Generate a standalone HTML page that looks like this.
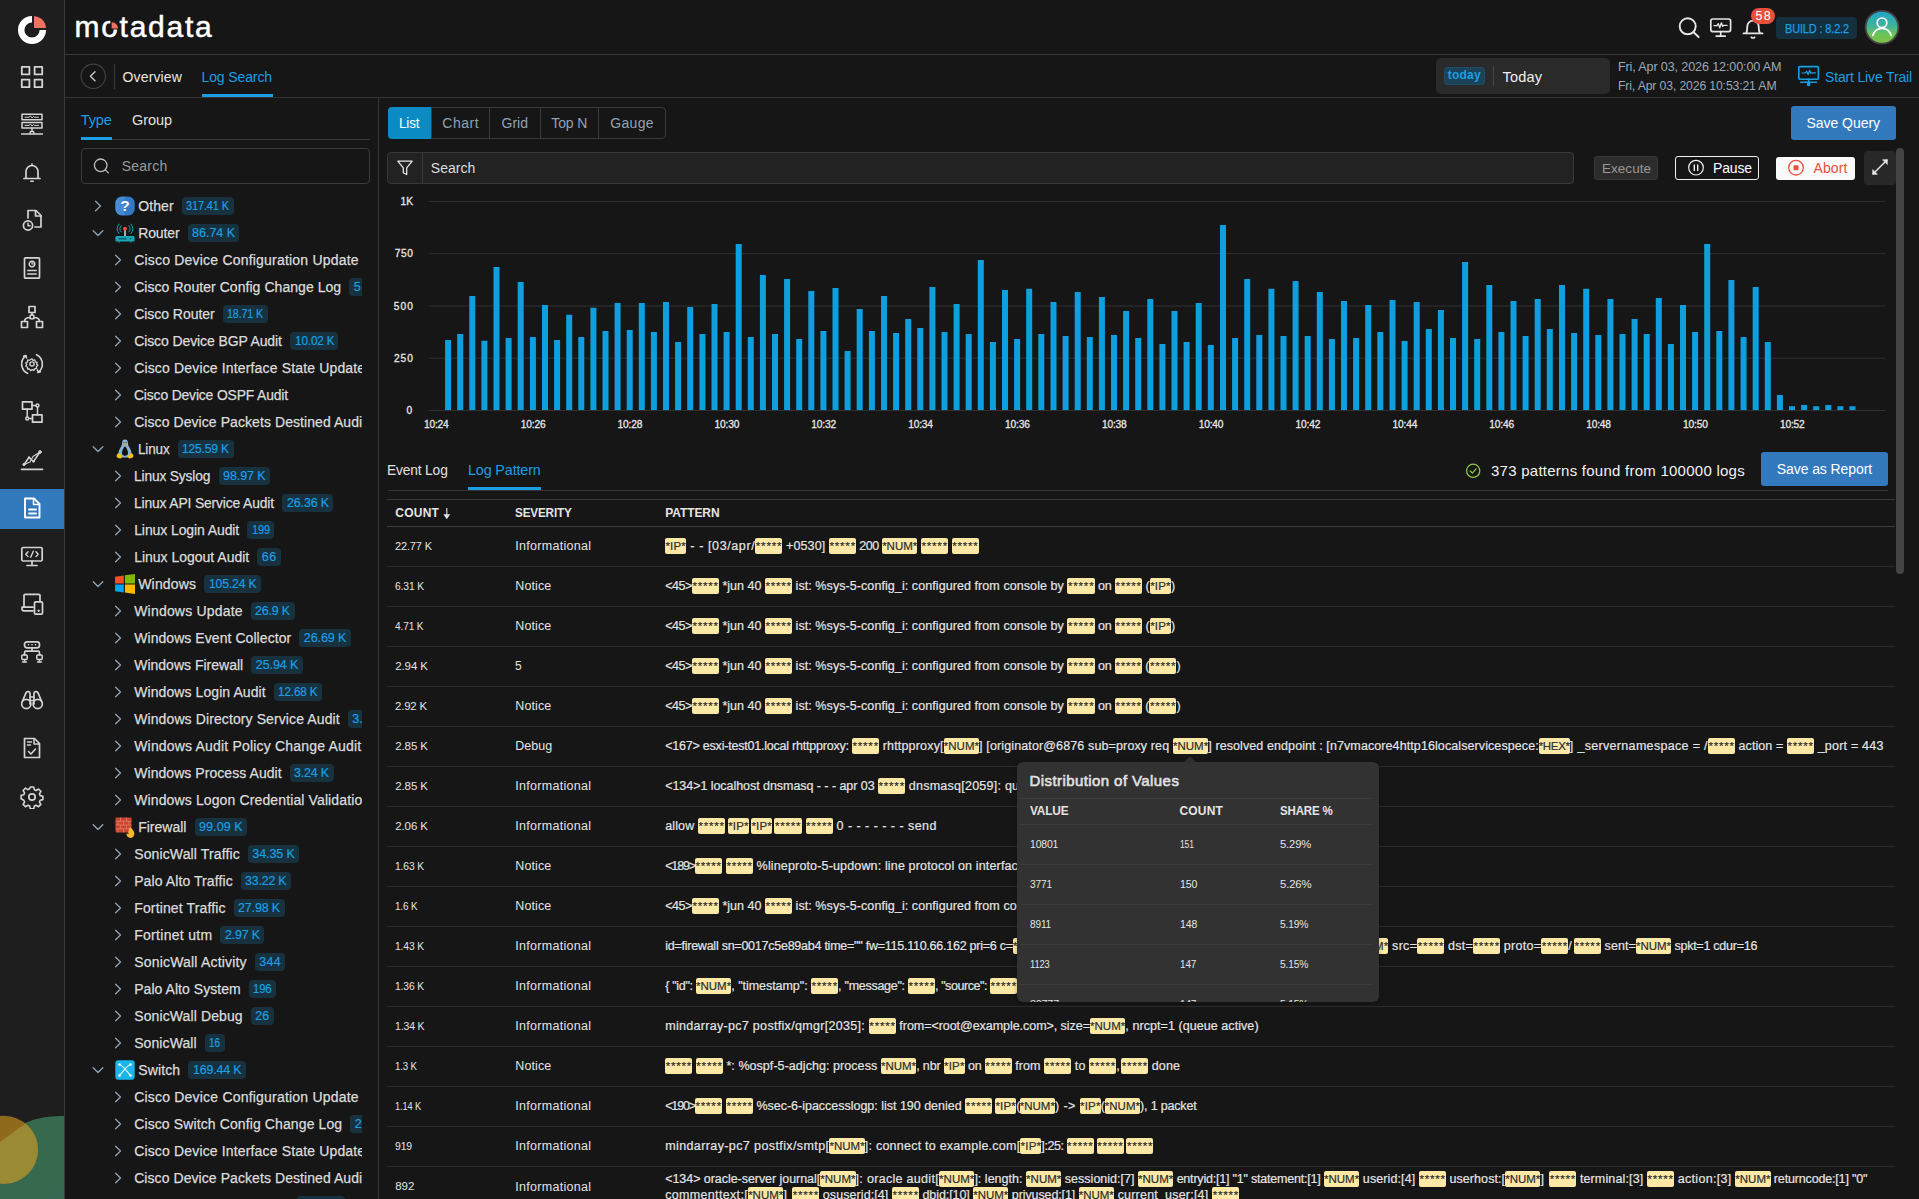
<!DOCTYPE html>
<html lang="en"><head><meta charset="utf-8"><title>Motadata - Log Search</title>
<style>
*{margin:0;padding:0}
html,body{width:1919px;height:1199px;overflow:hidden;background:#161616}
body{font-family:"Liberation Sans",sans-serif;position:relative;color:#e0e0e0}
#app{position:absolute;left:0;top:0;width:1919px;height:1199px;overflow:hidden}
#app div,#app span,#app svg,#app nav,#app header,#app aside,#app main,#app section{position:absolute}
#app span{white-space:pre}
#app .pl{-webkit-text-stroke:.2px #e4e4e4}
#app .pl span.hl{-webkit-text-stroke:.2px #333}
#app .pl span{position:static}
#app .pl span.hl{display:inline-flex;justify-content:center;height:16px;line-height:16px;margin-top:2px;vertical-align:top;background:#fde8a6;color:#333;border-radius:2px;text-align:center;font-size:11.5px;color:#2a2a2a}
svg text{font-family:"Liberation Sans",sans-serif}
</style></head>
<body><div id="app">
<nav style="left:0;top:0;width:65px;height:1199px"><div style="left:0px;top:0px;width:64px;height:1199px;background:#1e1e1e;"></div>
<div style="left:64px;top:0px;width:1px;height:1199px;background:#3a3a3a;"></div>
<svg style="left:0;top:1100px" width="64" height="99" viewBox="0 1100 64 99"><defs><clipPath id="yc"><circle cx="4" cy="1149.800" r="34"/></clipPath></defs><circle cx="60" cy="1203.700" r="87.800" fill="#37694f"/><circle cx="4" cy="1149.800" r="34" fill="#8f6a1c"/><path d="M-40 1171L60 1098.500V1199H-40z" fill="#9a8a33" clip-path="url(#yc)"/><g fill="#1f6f9a"><circle cx="59" cy="1187" r=".6"/><circle cx="55" cy="1190" r=".6"/><circle cx="61" cy="1192" r=".6"/><circle cx="52" cy="1195" r=".6"/><circle cx="57" cy="1195" r=".6"/><circle cx="61" cy="1196" r=".6"/><circle cx="49" cy="1198" r=".6"/></g></svg>
<svg style="left:17px;top:15px" width="30" height="30" viewBox="0 0 30 30"><path d="M15 4.2 A10.8 10.8 0 1 0 25.8 15" fill="none" stroke="#fff" stroke-width="6.4"/><path d="M17 1.2 A12 12 0 0 1 28.9 13 L17 13 Z" fill="#ee7260"/></svg>
<div style="left:0px;top:489px;width:64px;height:40px;background:#3279be;"></div>
<svg style="left:20px;top:65px" width="24" height="24" viewBox="0 0 24 24" fill="none" stroke="#d4d4d4" stroke-width="1.8" stroke-linecap="round" stroke-linejoin="round"><rect x="1.8" y="1.8" width="7.6" height="7.6"/><rect x="14.6" y="1.8" width="7.6" height="7.6"/><rect x="1.8" y="14.6" width="7.6" height="7.6"/><rect x="14.6" y="14.6" width="7.6" height="7.6"/></svg>
<svg style="left:20px;top:112px" width="24" height="24" viewBox="0 0 24 24" fill="none" stroke="#d4d4d4" stroke-width="1.7" stroke-linecap="round" stroke-linejoin="round"><rect x="2" y="2.2" width="20" height="5.6" stroke-width="1.5"/><rect x="2" y="10.4" width="20" height="5.6" stroke-width="1.5"/><path d="M5 5.2h4l1.5-1.3 1.5 2 1.5-1.5 1 .8h4M5 13.4h4l1.5-1.3 1.5 2 1.5-1.5 1 .8h4" stroke-width="1"/><path d="M12 16v3.5M9.8 21.5l.8-2h2.8l.8 2M1.5 22h21" stroke-width="1.5"/></svg>
<svg style="left:20px;top:160px" width="24" height="24" viewBox="0 0 24 24" fill="none" stroke="#d4d4d4" stroke-width="1.7" stroke-linecap="round" stroke-linejoin="round"><path d="M4 18.5h16M6 18.5v-7a6 6 0 0 1 12 0v7M12 4v1.4"/><path d="M10.8 21.3h2.4" stroke-width="1.6"/></svg>
<svg style="left:20px;top:208px" width="24" height="24" viewBox="0 0 24 24" fill="none" stroke="#d4d4d4" stroke-width="1.7" stroke-linecap="round" stroke-linejoin="round"><path d="M8 10V2.5h8l5 5V19h-6"/><path d="M15.5 2.8V8H21"/><circle cx="8" cy="17.5" r="4.6"/><path d="M8 15.3v2.4h2" stroke-width="1.4"/></svg>
<svg style="left:20px;top:256px" width="24" height="24" viewBox="0 0 24 24" fill="none" stroke="#d4d4d4" stroke-width="1.7" stroke-linecap="round" stroke-linejoin="round"><rect x="4.5" y="1.8" width="15" height="20.4" rx="1"/><circle cx="12" cy="8" r="2.8" stroke-width="1.4"/><path d="M12 8V5.4M12 8h2.6" stroke-width="1.2"/><path d="M7.8 14.5h8.4M7.8 18h8.4" stroke-width="1.6"/></svg>
<svg style="left:20px;top:305px" width="24" height="24" viewBox="0 0 24 24" fill="none" stroke="#d4d4d4" stroke-width="1.7" stroke-linecap="round" stroke-linejoin="round"><rect x="9" y="1.5" width="6" height="6"/><rect x="1.5" y="16.5" width="6" height="6"/><rect x="16.5" y="16.5" width="6" height="6"/><rect x="10.2" y="10.2" width="3.6" height="3.6" stroke-width="1.4"/><path d="M12 7.5v2.7M10.2 12.5C6 12.5 4.5 13.5 4.5 16.5M13.8 12.5c4.2 0 5.700 1 5.700 4"/></svg>
<svg style="left:20px;top:352px" width="24" height="24" viewBox="0 0 24 24" fill="none" stroke="#d4d4d4" stroke-width="1.7" stroke-linecap="round" stroke-linejoin="round"><circle cx="12" cy="12" r="2.1" stroke-width="1.4"/><path d="M12 6.8l1 1.6 1.9-.5.4 1.900 1.800.5-.5 1.700 1.200 1.400-1.400 1.200.2 1.900-1.900.2-.8 1.700-1.700-.8-1.600 1-1.100-1.600-1.900.1-.1-1.900-1.700-.9.900-1.700-.9-1.700 1.700-.9.100-1.900 1.900.1z" stroke-width="1.3"/><path d="M5.600 3.800A10.400 10.400 0 0 0 7.500 21.300M18.400 20.200A10.400 10.400 0 0 0 16.500 2.700" stroke-width="1.6"/><path d="M3.600 4.300l2.300-.8.600 2.400M20.400 19.700l-2.300.8-.600-2.400" stroke-width="1.6"/></svg>
<svg style="left:20px;top:400px" width="24" height="24" viewBox="0 0 24 24" fill="none" stroke="#d4d4d4" stroke-width="1.7" stroke-linecap="round" stroke-linejoin="round"><rect x="2.500" y="1.800" width="9.500" height="7.400"/><rect x="12.500" y="14.800" width="9.500" height="7.400"/><circle cx="17.500" cy="5.500" r="1.500" stroke-width="1.400"/><circle cx="7.200" cy="18.500" r="1.500" stroke-width="1.400"/><path d="M12 5.500h4M17.500 7v7.800M7.200 9.200V17M8.700 18.500h3.800" stroke-width="1.500"/></svg>
<svg style="left:20px;top:448px" width="24" height="24" viewBox="0 0 24 24" fill="none" stroke="#d4d4d4" stroke-width="1.7" stroke-linecap="round" stroke-linejoin="round"><path d="M1.500 21.300h21" stroke-width="1.700"/><path d="M4 16.500l5-7 4.500 4 6.500-9.500" stroke-width="1.500"/><path d="M4 16.500l6-2.500 3-5.500 7-4.500" stroke-width="1.100"/><circle cx="4" cy="16.500" r="1.200" fill="#d4d4d4" stroke-width=".8"/><circle cx="20" cy="4" r="1.400" fill="#d4d4d4" stroke-width=".8"/><circle cx="9" cy="9.500" r=".9" fill="#d4d4d4" stroke-width=".6"/><circle cx="13.500" cy="13.500" r=".9" fill="#d4d4d4" stroke-width=".6"/></svg>
<svg style="left:20px;top:496px" width="24" height="24" viewBox="0 0 24 24" fill="none" stroke="#fff" stroke-width="1.9" stroke-linecap="round" stroke-linejoin="round"><path d="M5 2.500h9l5.500 5.500v13.500H5z"/><path d="M13.500 2.800V8.500h5.800" stroke-width="1.500"/><path d="M9 13.500h7M9 17.500h7" stroke-width="1.900"/></svg>
<svg style="left:20px;top:545px" width="24" height="24" viewBox="0 0 24 24" fill="none" stroke="#d4d4d4" stroke-width="1.7" stroke-linecap="round" stroke-linejoin="round"><rect x="1.800" y="2.500" width="20.400" height="13.500" rx="1.500"/><path d="M12 16v3.500M7 20.500h10" /><path d="M8 6.800L5.800 9.200 8 11.600M16 6.800l2.200 2.400-2.200 2.400M13.300 6.200l-2.600 6" stroke-width="1.400"/></svg>
<svg style="left:20px;top:592px" width="24" height="24" viewBox="0 0 24 24" fill="none" stroke="#d4d4d4" stroke-width="1.7" stroke-linecap="round" stroke-linejoin="round"><path d="M4 15V3.500a1.200 1.200 0 0 1 1.200-1.200h13.600A1.200 1.200 0 0 1 20 3.500V9"/><path d="M13 15.200H2v1.600a2 2 0 0 0 2 2h9"/><rect x="14.500" y="9.800" width="8" height="12.400" rx="1.200"/><circle cx="18.500" cy="18.800" r=".7" fill="#d4d4d4" stroke-width="1"/></svg>
<svg style="left:20px;top:640px" width="24" height="24" viewBox="0 0 24 24" fill="none" stroke="#d4d4d4" stroke-width="1.7" stroke-linecap="round" stroke-linejoin="round"><rect x="4.500" y="1.800" width="15" height="6" rx="2.500"/><path d="M8.500 4.800h.1M12 4.800h.1M15.500 4.800h.1" stroke-width="1.500"/><path d="M12 7.800v3.400M4.500 15v-2.300a1.500 1.500 0 0 1 1.500-1.500h12a1.500 1.500 0 0 1 1.500 1.500V15"/><rect x="1.800" y="15" width="5.400" height="4.400" rx=".8" stroke-width="1.500"/><rect x="16.800" y="15" width="5.400" height="4.400" rx=".8" stroke-width="1.500"/><path d="M2.500 22h4M17.500 22h4M4.500 19.500V22M19.500 19.500V22" stroke-width="1.400"/></svg>
<svg style="left:20px;top:688px" width="24" height="24" viewBox="0 0 24 24" fill="none" stroke="#d4d4d4" stroke-width="1.7" stroke-linecap="round" stroke-linejoin="round"><circle cx="6.300" cy="16" r="4.600"/><circle cx="17.700" cy="16" r="4.600"/><path d="M2.300 13.500L6 4.800c.8-1.800 4-1.400 4 .7V16M21.700 13.500L18 4.800c-.8-1.800-4-1.400-4 .7V16M10 9h4M10 12.500h4" /></svg>
<svg style="left:20px;top:736px" width="24" height="24" viewBox="0 0 24 24" fill="none" stroke="#d4d4d4" stroke-width="1.7" stroke-linecap="round" stroke-linejoin="round"><path d="M4.500 2.500h10l5 5v14h-15z"/><path d="M14 2.800V8h5.200" stroke-width="1.500"/><path d="M7.500 6h4M7.500 9h3" stroke-width="1.400"/><path d="M8.500 15.500l2.500 2.500 4.500-5" stroke-width="1.600"/></svg>
<svg style="left:20px;top:785px" width="24" height="24" viewBox="0 0 24 24" fill="none" stroke="#d4d4d4" stroke-width="1.7" stroke-linecap="round" stroke-linejoin="round"><circle cx="12" cy="12" r="3.200"/><path d="M10.300 2h3.400l.6 2.700 1.800.8 2.400-1.500 2.400 2.400-1.500 2.400.8 1.800 2.700.6v3.400l-2.700.6-.8 1.800 1.500 2.400-2.400 2.400-2.400-1.500-1.800.8-.6 2.700h-3.400l-.6-2.700-1.800-.8-2.400 1.500-2.400-2.400 1.500-2.400-.8-1.800L1.100 13.700v-3.400l2.700-.6.800-1.800-1.500-2.400 2.400-2.400 2.400 1.500 1.800-.8z" stroke-width="1.600"/></svg></nav>
<header style="left:0;top:0;width:1919px;height:98px"><div style="left:65px;top:54px;width:1854px;height:1px;background:#3a3a3a;"></div>
<div style="left:65px;top:97px;width:1854px;height:1px;background:#333;"></div>
<span style="left:74.4px;top:9.0px;font-size:30px;line-height:36px;color:#fff;-webkit-text-stroke:0.5px #fff;letter-spacing:1.75px;">motadata</span>
<svg style="left:110px;top:20px" width="10" height="10" viewBox="0 0 10 10"><path d="M0.400 9.600V0.600A9 9 0 0 1 9.400 9.600Z" fill="#161616"/><path d="M1.600 8.600V2.200A6.800 6.800 0 0 1 8.200 8.600Z" fill="#ee7260"/></svg>
<svg style="left:1676px;top:15px" width="26" height="26" viewBox="0 0 26 26" fill="none" stroke="#e6e6e6" stroke-width="1.900" stroke-linecap="round"><circle cx="11.700" cy="11.300" r="8"/><path d="M17.600 17.200l5 4.800"/></svg>
<svg style="left:1709px;top:17px" width="24" height="22" viewBox="0 0 24 22" fill="none" stroke="#e6e6e6" stroke-width="1.700" stroke-linecap="round" stroke-linejoin="round"><rect x="1.800" y="2" width="19.800" height="12.600" rx="2"/><path d="M11.700 14.600v4M7.200 19.200h9"/><path d="M5 8.600h3l1.200-2 1.600 4.200 1.600-5 1.400 3.600.9-1h3.300" stroke-width="1.300"/></svg>
<svg style="left:1740px;top:15px" width="26" height="26" viewBox="0 0 26 26" fill="none" stroke="#e6e6e6" stroke-width="1.800" stroke-linecap="round" stroke-linejoin="round"><path d="M3.500 18.400h19M6 18.400c1-1.600 1.300-4 1.300-7a5.700 5.700 0 0 1 11.400 0c0 3 .3 5.400 1.300 7"/><path d="M11.400 22.300c.8.800 2.400.8 3.200 0"/></svg>
<div style="left:1751px;top:8px;width:24px;height:16px;background:#e8503c;border-radius:8px;"></div>
<span style="left:1755.5px;top:8.0px;font-size:12.5px;line-height:16px;color:#fff;letter-spacing:1.397px;">58</span>
<div style="left:1776px;top:17px;width:81px;height:22px;background:#14303f;border-radius:4px;"></div>
<span style="left:1784.5px;top:20.2px;font-size:12.5px;line-height:18px;color:#1a9fe3;transform:scaleX(0.8748);transform-origin:0 50%;letter-spacing:-0.15px;-webkit-text-stroke:.25px #1a9fe3;">BUILD : 8.2.2</span>
<svg style="left:1864px;top:9px" width="36" height="36" viewBox="0 0 36 36"><defs><linearGradient id="avg" x1="0" y1="0" x2="0" y2="1"><stop offset="0" stop-color="#1ea4cf"/><stop offset=".45" stop-color="#3fb39a"/><stop offset=".7" stop-color="#6cc35a"/><stop offset="1" stop-color="#7fc241"/></linearGradient></defs><circle cx="18" cy="18.300" r="16.400" fill="url(#avg)" stroke="#454545" stroke-width="1.800"/><g fill="none" stroke="#fff" stroke-width="1.700" stroke-linecap="round"><circle cx="18" cy="13.800" r="4.800"/><path d="M8.800 26.500c1.500-5 5-7.200 9.200-7.200s7.700 2.200 9.200 7.200"/></g></svg>
<svg style="left:80px;top:63px" width="27" height="27" viewBox="0 0 27 27" fill="none"><circle cx="13.300" cy="13.300" r="12.200" stroke="#444" stroke-width="1.100"/><path d="M15 8.800l-4.600 4.500 4.600 4.500" stroke="#c8c8c8" stroke-width="1.400" stroke-linecap="round" stroke-linejoin="round"/></svg>
<div style="left:114px;top:64px;width:1px;height:25px;background:#3a3a3a;"></div>
<span style="left:122.5px;top:66.5px;font-size:14px;line-height:20px;color:#e8e8e8;letter-spacing:0.154px;">Overview</span>
<span style="left:201.5px;top:66.5px;font-size:14px;line-height:20px;color:#1a9fe3;letter-spacing:-0.117px;">Log Search</span>
<div style="left:202px;top:94px;width:71px;height:3px;background:#1a9fe3;"></div>
<div style="left:1436px;top:58px;width:174px;height:36px;background:#2a2a2a;border-radius:5px;"></div>
<div style="left:1444px;top:67px;width:41px;height:18px;background:#1a4258;border:1px dotted #235a75;box-sizing:border-box;border-radius:4px;"></div>
<span style="left:1447.8px;top:67.3px;font-size:12px;line-height:16px;color:#1a9fe3;font-weight:700;letter-spacing:0.221px;">today</span>
<div style="left:1493px;top:66px;width:1px;height:20px;background:#444;"></div>
<span style="left:1502.5px;top:66.5px;font-size:14.5px;line-height:20px;color:#f0f0f0;letter-spacing:0.179px;">Today</span>
<span style="left:1618px;top:58.2px;font-size:13px;line-height:18px;color:#9aa9b8;transform:scaleX(0.9706);transform-origin:0 50%;letter-spacing:-0.15px;">Fri, Apr 03, 2026 12:00:00 AM</span>
<span style="left:1618px;top:76.5px;font-size:13px;line-height:18px;color:#9aa9b8;transform:scaleX(0.941);transform-origin:0 50%;letter-spacing:-0.15px;">Fri, Apr 03, 2026 10:53:21 AM</span>
<svg style="left:1797px;top:65px" width="24" height="22" viewBox="0 0 24 22" fill="none" stroke="#1a9fe3" stroke-width="1.600" stroke-linecap="round" stroke-linejoin="round"><rect x="1.800" y="1.600" width="19.600" height="12.600" rx="1"/><path d="M11.600 14.200v5.400M3.800 17.200h15.600"/><circle cx="11.600" cy="19.400" r="1" fill="#1a9fe3"/><path d="M5 8h3.500l1.200-1.800 1.400 3.400 1.500-4.400 1.300 3.400.9-.8h3.600" stroke-width="1.200"/></svg>
<span style="left:1824.5px;top:66.5px;font-size:14px;line-height:20px;color:#1a9fe3;transform:scaleX(0.9983);transform-origin:0 50%;letter-spacing:-0.15px;">Start Live Trail</span></header>
<aside style="left:0;top:0;width:379px;height:1199px"><div style="left:378px;top:98px;width:1px;height:1101px;background:#333;"></div>
<span style="left:80.8px;top:109.5px;font-size:14.5px;line-height:20px;color:#1a9fe3;letter-spacing:-0.124px;">Type</span>
<span style="left:132px;top:109.5px;font-size:14.5px;line-height:20px;color:#e0e0e0;letter-spacing:-0.067px;">Group</span>
<div style="left:81px;top:139px;width:289px;height:1px;background:#3a3a3a;"></div>
<div style="left:81px;top:137px;width:31px;height:3px;background:#1a9fe3;"></div>
<div style="left:81px;top:148px;width:289px;height:36px;border:1px solid #3c3c3c;box-sizing:border-box;border-radius:4px;"></div>
<svg style="left:92px;top:157px" width="18" height="18" viewBox="0 0 18 18" fill="none" stroke="#bdbdbd" stroke-width="1.300" stroke-linecap="round"><circle cx="8.700" cy="8.300" r="6.300"/><path d="M13.300 12.900l3 3"/></svg>
<span style="left:121.8px;top:155.8px;font-size:14px;line-height:20px;color:#9a9a9a;letter-spacing:0.207px;">Search</span>
<div style="left:0;top:0;width:362px;height:1199px;overflow:hidden"><svg style="left:93px;top:198.60000000000002px" width="10" height="14" viewBox="0 0 10 14" fill="none" stroke="#8fa3b8" stroke-width="1.300" stroke-linecap="round" stroke-linejoin="round"><path d="M2.600 2.200l4.900 4.800-4.900 4.800"/></svg><svg style="left:115px;top:195.5px" width="20" height="20" viewBox="0 0 20 20"><defs><linearGradient id="og" x1="0" y1="0" x2="1" y2="0"><stop offset="0" stop-color="#4a90d8"/><stop offset=".5" stop-color="#3f86d0"/><stop offset=".5" stop-color="#3578c4"/><stop offset="1" stop-color="#3578c4"/></linearGradient></defs><rect x="0.300" y="0.600" width="19.400" height="18.800" rx="6.500" fill="url(#og)"/><text x="10" y="15.400" text-anchor="middle" font-size="15.500" font-weight="700" fill="#fff">?</text></svg><span style="left:138.2px;top:195.8px;font-size:14px;line-height:20px;color:#dcdcdc;letter-spacing:0.108px;-webkit-text-stroke:0.25px #dcdcdc;">Other</span><div style="left:181.9px;top:197.2px;width:51.79999999999998px;height:17.700000000000017px;background:#17313e;border-radius:4px;"></div><span style="left:186.3px;top:197.8px;font-size:12.5px;line-height:17px;color:#1a9fe3;transform:scaleX(0.879);transform-origin:0 50%;letter-spacing:-0.15px;-webkit-text-stroke:.2px #1a9fe3;">317.41 K</span><svg style="left:90.7px;top:227.8px" width="14" height="10" viewBox="0 0 14 10" fill="none" stroke="#8fa3b8" stroke-width="1.300" stroke-linecap="round" stroke-linejoin="round"><path d="M2.200 2.700l4.800 4.800 4.800-4.800"/></svg><svg style="left:115px;top:222.5px" width="20" height="20" viewBox="0 0 20 20" fill="none"><rect x="0.500" y="13" width="19" height="5.500" rx="1.200" fill="#19a7b8"/><path d="M3.500 15.800h8" stroke="#0b4c57" stroke-width="1.200"/><circle cx="15.500" cy="15.800" r=".8" fill="#0b4c57"/><path d="M10 7v6" stroke="#c9d3da" stroke-width="1.600"/><circle cx="10" cy="5.800" r="2" fill="#e8503c"/><path d="M6.400 2.400a5 5 0 0 0 0 6.800M13.600 2.400a5 5 0 0 1 0 6.800M4.200 .800a8 8 0 0 0 0 10M15.800 .800a8 8 0 0 1 0 10" stroke="#19a7b8" stroke-width="1"/><path d="M4 18.500v1M16 18.500v1" stroke="#19a7b8" stroke-width="1.500"/></svg><span style="left:138.2px;top:222.8px;font-size:14px;line-height:20px;color:#dcdcdc;letter-spacing:-0.131px;-webkit-text-stroke:0.25px #dcdcdc;">Router</span><div style="left:187.7px;top:224.2px;width:51.80000000000001px;height:17.700000000000017px;background:#17313e;border-radius:4px;"></div><span style="left:192.1px;top:224.8px;font-size:12.5px;line-height:17px;color:#1a9fe3;letter-spacing:-0.014px;-webkit-text-stroke:.2px #1a9fe3;">86.74 K</span><svg style="left:112.7px;top:252.60000000000002px" width="10" height="14" viewBox="0 0 10 14" fill="none" stroke="#8fa3b8" stroke-width="1.300" stroke-linecap="round" stroke-linejoin="round"><path d="M2.600 2.200l4.900 4.800-4.900 4.800"/></svg><span style="left:134.2px;top:249.8px;font-size:14px;line-height:20px;color:#dcdcdc;letter-spacing:0.203px;-webkit-text-stroke:0.25px #dcdcdc;">Cisco Device Configuration Update</span><svg style="left:112.7px;top:279.6px" width="10" height="14" viewBox="0 0 10 14" fill="none" stroke="#8fa3b8" stroke-width="1.300" stroke-linecap="round" stroke-linejoin="round"><path d="M2.600 2.200l4.900 4.800-4.900 4.800"/></svg><span style="left:134.2px;top:276.8px;font-size:14px;line-height:20px;color:#dcdcdc;letter-spacing:0.052px;-webkit-text-stroke:0.25px #dcdcdc;">Cisco Router Config Change Log</span><div style="left:349.4px;top:278.2px;width:15.800000000000011px;height:17.69999999999999px;background:#17313e;border-radius:4px;"></div><span style="left:353.8px;top:278.8px;font-size:12.5px;line-height:17px;color:#1a9fe3;letter-spacing:0.047px;-webkit-text-stroke:.2px #1a9fe3;">5</span><svg style="left:112.7px;top:306.6px" width="10" height="14" viewBox="0 0 10 14" fill="none" stroke="#8fa3b8" stroke-width="1.300" stroke-linecap="round" stroke-linejoin="round"><path d="M2.600 2.200l4.900 4.800-4.900 4.800"/></svg><span style="left:134.2px;top:303.8px;font-size:14px;line-height:20px;color:#dcdcdc;letter-spacing:-0.036px;-webkit-text-stroke:0.25px #dcdcdc;">Cisco Router</span><div style="left:222.9px;top:305.2px;width:44.79999999999998px;height:17.69999999999999px;background:#17313e;border-radius:4px;"></div><span style="left:227.3px;top:305.8px;font-size:12.5px;line-height:17px;color:#1a9fe3;transform:scaleX(0.8548);transform-origin:0 50%;letter-spacing:-0.15px;-webkit-text-stroke:.2px #1a9fe3;">18.71 K</span><svg style="left:112.7px;top:333.6px" width="10" height="14" viewBox="0 0 10 14" fill="none" stroke="#8fa3b8" stroke-width="1.300" stroke-linecap="round" stroke-linejoin="round"><path d="M2.600 2.200l4.900 4.800-4.900 4.800"/></svg><span style="left:134.2px;top:330.8px;font-size:14px;line-height:20px;color:#dcdcdc;letter-spacing:-0.103px;-webkit-text-stroke:0.25px #dcdcdc;">Cisco Device BGP Audit</span><div style="left:290.1px;top:332.2px;width:48.299999999999955px;height:17.69999999999999px;background:#17313e;border-radius:4px;"></div><span style="left:294.5px;top:332.8px;font-size:12.5px;line-height:17px;color:#1a9fe3;transform:scaleX(0.9379);transform-origin:0 50%;letter-spacing:-0.15px;-webkit-text-stroke:.2px #1a9fe3;">10.02 K</span><svg style="left:112.7px;top:360.6px" width="10" height="14" viewBox="0 0 10 14" fill="none" stroke="#8fa3b8" stroke-width="1.300" stroke-linecap="round" stroke-linejoin="round"><path d="M2.600 2.200l4.900 4.800-4.900 4.800"/></svg><span style="left:134.2px;top:357.8px;font-size:14px;line-height:20px;color:#dcdcdc;letter-spacing:0.155px;-webkit-text-stroke:0.25px #dcdcdc;">Cisco Device Interface State Update</span><svg style="left:112.7px;top:387.6px" width="10" height="14" viewBox="0 0 10 14" fill="none" stroke="#8fa3b8" stroke-width="1.300" stroke-linecap="round" stroke-linejoin="round"><path d="M2.600 2.200l4.900 4.800-4.900 4.800"/></svg><span style="left:134.2px;top:384.8px;font-size:14px;line-height:20px;color:#dcdcdc;transform:scaleX(0.9913);transform-origin:0 50%;letter-spacing:-0.15px;-webkit-text-stroke:0.25px #dcdcdc;">Cisco Device OSPF Audit</span><svg style="left:112.7px;top:414.6px" width="10" height="14" viewBox="0 0 10 14" fill="none" stroke="#8fa3b8" stroke-width="1.300" stroke-linecap="round" stroke-linejoin="round"><path d="M2.600 2.200l4.900 4.800-4.900 4.800"/></svg><span style="left:134.2px;top:411.8px;font-size:14px;line-height:20px;color:#dcdcdc;letter-spacing:0.071px;-webkit-text-stroke:0.25px #dcdcdc;">Cisco Device Packets Destined Audit</span><svg style="left:90.7px;top:443.8px" width="14" height="10" viewBox="0 0 14 10" fill="none" stroke="#8fa3b8" stroke-width="1.300" stroke-linecap="round" stroke-linejoin="round"><path d="M2.200 2.700l4.800 4.800 4.800-4.800"/></svg><svg style="left:115px;top:438.5px" width="20" height="20" viewBox="0 0 20 20"><path d="M10 0.600c-2 0-3 1.600-3 3.600 0 1.700-.4 2.600-1.600 4.600C4 11.200 3.200 13.500 3.400 16c.2 1.800 2.600 2.600 6.600 2.600s6.400-.8 6.600-2.600c.2-2.500-.600-4.800-2-7.200-1.200-2-1.600-2.900-1.600-4.600 0-2-1-3.600-3-3.600z" fill="#8db3d4"/><path d="M10 7.200c-1.500 1.500-3 4.200-3 6.900 0 1.800 1.200 2.700 3 2.700s3-.9 3-2.700c0-2.700-1.500-5.400-3-6.900z" fill="#101010"/><path d="M8.300 5.200l1.700-.7 1.700.7-1.700 1.500z" fill="#f59b1c"/><circle cx="8.900" cy="3.600" r=".55" fill="#223"/><circle cx="11.100" cy="3.600" r=".55" fill="#223"/><path d="M3 14.600c1.200-.6 2.600.3 3.600 1.900.9 1.500.2 2.900-1.600 2.900-1.600 0-3.200-.6-3.400-1.800-.1-1 .4-2.400 1.400-3z" fill="#f5c211"/><path d="M17 14.600c-1.200-.6-2.600.3-3.600 1.900-.9 1.500-.2 2.900 1.600 2.900 1.600 0 3.200-.6 3.400-1.800.1-1-.4-2.400-1.400-3z" fill="#f5c211"/></svg><span style="left:138.2px;top:438.8px;font-size:14px;line-height:20px;color:#dcdcdc;transform:scaleX(0.9636);transform-origin:0 50%;letter-spacing:-0.15px;-webkit-text-stroke:0.25px #dcdcdc;">Linux</span><div style="left:178.0px;top:440.2px;width:55.80000000000001px;height:17.69999999999999px;background:#17313e;border-radius:4px;"></div><span style="left:182.4px;top:440.8px;font-size:12.5px;line-height:17px;color:#1a9fe3;transform:scaleX(0.9608);transform-origin:0 50%;letter-spacing:-0.15px;-webkit-text-stroke:.2px #1a9fe3;">125.59 K</span><svg style="left:112.7px;top:468.6px" width="10" height="14" viewBox="0 0 10 14" fill="none" stroke="#8fa3b8" stroke-width="1.300" stroke-linecap="round" stroke-linejoin="round"><path d="M2.600 2.200l4.900 4.800-4.900 4.800"/></svg><span style="left:134.2px;top:465.8px;font-size:14px;line-height:20px;color:#dcdcdc;transform:scaleX(0.9826);transform-origin:0 50%;letter-spacing:-0.15px;-webkit-text-stroke:0.25px #dcdcdc;">Linux Syslog</span><div style="left:218.7px;top:467.2px;width:51.30000000000001px;height:17.69999999999999px;background:#17313e;border-radius:4px;"></div><span style="left:223.1px;top:467.8px;font-size:12.5px;line-height:17px;color:#1a9fe3;letter-spacing:-0.091px;-webkit-text-stroke:.2px #1a9fe3;">98.97 K</span><svg style="left:112.7px;top:495.6px" width="10" height="14" viewBox="0 0 10 14" fill="none" stroke="#8fa3b8" stroke-width="1.300" stroke-linecap="round" stroke-linejoin="round"><path d="M2.600 2.200l4.900 4.800-4.900 4.800"/></svg><span style="left:134.2px;top:492.8px;font-size:14px;line-height:20px;color:#dcdcdc;transform:scaleX(0.9903);transform-origin:0 50%;letter-spacing:-0.15px;-webkit-text-stroke:0.25px #dcdcdc;">Linux API Service Audit</span><div style="left:282.4px;top:494.2px;width:50.80000000000001px;height:17.69999999999999px;background:#17313e;border-radius:4px;"></div><span style="left:286.8px;top:494.8px;font-size:12.5px;line-height:17px;color:#1a9fe3;transform:scaleX(0.9972);transform-origin:0 50%;letter-spacing:-0.15px;-webkit-text-stroke:.2px #1a9fe3;">26.36 K</span><svg style="left:112.7px;top:522.5999999999999px" width="10" height="14" viewBox="0 0 10 14" fill="none" stroke="#8fa3b8" stroke-width="1.300" stroke-linecap="round" stroke-linejoin="round"><path d="M2.600 2.200l4.900 4.800-4.900 4.800"/></svg><span style="left:134.2px;top:519.8px;font-size:14px;line-height:20px;color:#dcdcdc;letter-spacing:-0.099px;-webkit-text-stroke:0.25px #dcdcdc;">Linux Login Audit</span><div style="left:247.4px;top:521.2px;width:26.799999999999983px;height:17.699999999999932px;background:#17313e;border-radius:4px;"></div><span style="left:251.8px;top:521.8px;font-size:12.5px;line-height:17px;color:#1a9fe3;transform:scaleX(0.8788);transform-origin:0 50%;letter-spacing:-0.15px;-webkit-text-stroke:.2px #1a9fe3;">199</span><svg style="left:112.7px;top:549.5999999999999px" width="10" height="14" viewBox="0 0 10 14" fill="none" stroke="#8fa3b8" stroke-width="1.300" stroke-linecap="round" stroke-linejoin="round"><path d="M2.600 2.200l4.900 4.800-4.900 4.800"/></svg><span style="left:134.2px;top:546.8px;font-size:14px;line-height:20px;color:#dcdcdc;letter-spacing:-0.012px;-webkit-text-stroke:0.25px #dcdcdc;">Linux Logout Audit</span><div style="left:257.4px;top:548.2px;width:23.30000000000001px;height:17.699999999999932px;background:#17313e;border-radius:4px;"></div><span style="left:261.8px;top:548.8px;font-size:12.5px;line-height:17px;color:#1a9fe3;letter-spacing:0.397px;-webkit-text-stroke:.2px #1a9fe3;">66</span><svg style="left:90.7px;top:578.8px" width="14" height="10" viewBox="0 0 14 10" fill="none" stroke="#8fa3b8" stroke-width="1.300" stroke-linecap="round" stroke-linejoin="round"><path d="M2.200 2.700l4.800 4.800 4.800-4.800"/></svg><svg style="left:115px;top:573.5px" width="20" height="20" viewBox="0 0 20 20"><path d="M0 2.800l8.800-1.300v8H0z" fill="#f25022"/><path d="M9.900 1.300L20 0v9.500H9.900z" fill="#7fba00"/><path d="M0 10.600h8.800v8L0 17.300z" fill="#00a4ef"/><path d="M9.900 10.600H20V20l-10.100-1.400z" fill="#ffb900"/></svg><span style="left:138.2px;top:573.8px;font-size:14px;line-height:20px;color:#dcdcdc;letter-spacing:0.186px;-webkit-text-stroke:0.25px #dcdcdc;">Windows</span><div style="left:204.4px;top:575.2px;width:56.29999999999998px;height:17.699999999999932px;background:#17313e;border-radius:4px;"></div><span style="left:208.8px;top:575.8px;font-size:12.5px;line-height:17px;color:#1a9fe3;transform:scaleX(0.971);transform-origin:0 50%;letter-spacing:-0.15px;-webkit-text-stroke:.2px #1a9fe3;">105.24 K</span><svg style="left:112.7px;top:603.5999999999999px" width="10" height="14" viewBox="0 0 10 14" fill="none" stroke="#8fa3b8" stroke-width="1.300" stroke-linecap="round" stroke-linejoin="round"><path d="M2.600 2.200l4.900 4.800-4.900 4.800"/></svg><span style="left:134.2px;top:600.8px;font-size:14px;line-height:20px;color:#dcdcdc;letter-spacing:0.198px;-webkit-text-stroke:0.25px #dcdcdc;">Windows Update</span><div style="left:250.9px;top:602.2px;width:43.79999999999998px;height:17.699999999999932px;background:#17313e;border-radius:4px;"></div><span style="left:255.3px;top:602.8px;font-size:12.5px;line-height:17px;color:#1a9fe3;transform:scaleX(0.9911);transform-origin:0 50%;letter-spacing:-0.15px;-webkit-text-stroke:.2px #1a9fe3;">26.9 K</span><svg style="left:112.7px;top:630.5999999999999px" width="10" height="14" viewBox="0 0 10 14" fill="none" stroke="#8fa3b8" stroke-width="1.300" stroke-linecap="round" stroke-linejoin="round"><path d="M2.600 2.200l4.900 4.800-4.900 4.800"/></svg><span style="left:134.2px;top:627.8px;font-size:14px;line-height:20px;color:#dcdcdc;letter-spacing:0.062px;-webkit-text-stroke:0.25px #dcdcdc;">Windows Event Collector</span><div style="left:299.4px;top:629.2px;width:51.30000000000001px;height:17.699999999999932px;background:#17313e;border-radius:4px;"></div><span style="left:303.8px;top:629.8px;font-size:12.5px;line-height:17px;color:#1a9fe3;letter-spacing:-0.091px;-webkit-text-stroke:.2px #1a9fe3;">26.69 K</span><svg style="left:112.7px;top:657.5999999999999px" width="10" height="14" viewBox="0 0 10 14" fill="none" stroke="#8fa3b8" stroke-width="1.300" stroke-linecap="round" stroke-linejoin="round"><path d="M2.600 2.200l4.900 4.800-4.900 4.800"/></svg><span style="left:134.2px;top:654.8px;font-size:14px;line-height:20px;color:#dcdcdc;letter-spacing:0.006px;-webkit-text-stroke:0.25px #dcdcdc;">Windows Firewall</span><div style="left:251.4px;top:656.2px;width:51.29999999999998px;height:17.699999999999932px;background:#17313e;border-radius:4px;"></div><span style="left:255.8px;top:656.8px;font-size:12.5px;line-height:17px;color:#1a9fe3;letter-spacing:-0.091px;-webkit-text-stroke:.2px #1a9fe3;">25.94 K</span><svg style="left:112.7px;top:684.5999999999999px" width="10" height="14" viewBox="0 0 10 14" fill="none" stroke="#8fa3b8" stroke-width="1.300" stroke-linecap="round" stroke-linejoin="round"><path d="M2.600 2.200l4.900 4.800-4.900 4.800"/></svg><span style="left:134.2px;top:681.8px;font-size:14px;line-height:20px;color:#dcdcdc;letter-spacing:0.083px;-webkit-text-stroke:0.25px #dcdcdc;">Windows Login Audit</span><div style="left:273.9px;top:683.2px;width:48.30000000000001px;height:17.699999999999932px;background:#17313e;border-radius:4px;"></div><span style="left:278.3px;top:683.8px;font-size:12.5px;line-height:17px;color:#1a9fe3;transform:scaleX(0.9379);transform-origin:0 50%;letter-spacing:-0.15px;-webkit-text-stroke:.2px #1a9fe3;">12.68 K</span><svg style="left:112.7px;top:711.5999999999999px" width="10" height="14" viewBox="0 0 10 14" fill="none" stroke="#8fa3b8" stroke-width="1.300" stroke-linecap="round" stroke-linejoin="round"><path d="M2.600 2.200l4.900 4.800-4.900 4.800"/></svg><span style="left:134.2px;top:708.8px;font-size:14px;line-height:20px;color:#dcdcdc;letter-spacing:0.105px;-webkit-text-stroke:0.25px #dcdcdc;">Windows Directory Service Audit</span><div style="left:347.9px;top:710.2px;width:44.80000000000001px;height:17.699999999999932px;background:#17313e;border-radius:4px;"></div><span style="left:352.3px;top:710.8px;font-size:12.5px;line-height:17px;color:#1a9fe3;letter-spacing:-0.026px;-webkit-text-stroke:.2px #1a9fe3;">3.01 K</span><svg style="left:112.7px;top:738.5999999999999px" width="10" height="14" viewBox="0 0 10 14" fill="none" stroke="#8fa3b8" stroke-width="1.300" stroke-linecap="round" stroke-linejoin="round"><path d="M2.600 2.200l4.900 4.800-4.900 4.800"/></svg><span style="left:134.2px;top:735.8px;font-size:14px;line-height:20px;color:#dcdcdc;letter-spacing:0.184px;-webkit-text-stroke:0.25px #dcdcdc;">Windows Audit Policy Change Audit</span><svg style="left:112.7px;top:765.5999999999999px" width="10" height="14" viewBox="0 0 10 14" fill="none" stroke="#8fa3b8" stroke-width="1.300" stroke-linecap="round" stroke-linejoin="round"><path d="M2.600 2.200l4.900 4.800-4.900 4.800"/></svg><span style="left:134.2px;top:762.8px;font-size:14px;line-height:20px;color:#dcdcdc;letter-spacing:0.059px;-webkit-text-stroke:0.25px #dcdcdc;">Windows Process Audit</span><div style="left:289.9px;top:764.2px;width:43.80000000000001px;height:17.699999999999932px;background:#17313e;border-radius:4px;"></div><span style="left:294.3px;top:764.8px;font-size:12.5px;line-height:17px;color:#1a9fe3;transform:scaleX(0.9911);transform-origin:0 50%;letter-spacing:-0.15px;-webkit-text-stroke:.2px #1a9fe3;">3.24 K</span><svg style="left:112.7px;top:792.5999999999999px" width="10" height="14" viewBox="0 0 10 14" fill="none" stroke="#8fa3b8" stroke-width="1.300" stroke-linecap="round" stroke-linejoin="round"><path d="M2.600 2.200l4.900 4.800-4.900 4.800"/></svg><span style="left:134.2px;top:789.8px;font-size:14px;line-height:20px;color:#dcdcdc;letter-spacing:0.126px;-webkit-text-stroke:0.25px #dcdcdc;">Windows Logon Credential Validation</span><svg style="left:90.7px;top:821.8px" width="14" height="10" viewBox="0 0 14 10" fill="none" stroke="#8fa3b8" stroke-width="1.300" stroke-linecap="round" stroke-linejoin="round"><path d="M2.200 2.700l4.800 4.800 4.800-4.800"/></svg><svg style="left:115px;top:816.5px" width="22" height="22" viewBox="0 0 22 22"><rect x="0.500" y="0.500" width="16" height="15" rx="1" fill="#c9452f"/><path d="M0.500 4.300h16M0.500 8h16M0.500 11.800h16M5.500 0.500v3.800M11.500 0.500v3.800M8.500 4.300V8M3 4.300V8M14 4.300V8M5.500 8v3.800M11.500 8v3.800M8.500 11.800v3.700M3 11.800v3.700" stroke="#e8836f" stroke-width=".7"/><path d="M15 10c2.500 2.500 5 4.500 4.200 8-.6 2.300-3 3.200-4.700 2.800-2.300-.5-3.500-2.600-2.700-5 .4 1 1 1.400 1.600 1.500-.3-2.600.3-5 1.600-7.300z" fill="#f7b731"/></svg><span style="left:138.2px;top:816.8px;font-size:14px;line-height:20px;color:#dcdcdc;letter-spacing:0.01px;-webkit-text-stroke:0.25px #dcdcdc;">Firewall</span><div style="left:194.7px;top:818.2px;width:52.30000000000001px;height:17.699999999999932px;background:#17313e;border-radius:4px;"></div><span style="left:199.1px;top:818.8px;font-size:12.5px;line-height:17px;color:#1a9fe3;letter-spacing:0.063px;-webkit-text-stroke:.2px #1a9fe3;">99.09 K</span><svg style="left:112.7px;top:846.5999999999999px" width="10" height="14" viewBox="0 0 10 14" fill="none" stroke="#8fa3b8" stroke-width="1.300" stroke-linecap="round" stroke-linejoin="round"><path d="M2.600 2.200l4.900 4.800-4.900 4.800"/></svg><span style="left:134.2px;top:843.8px;font-size:14px;line-height:20px;color:#dcdcdc;letter-spacing:0.123px;-webkit-text-stroke:0.25px #dcdcdc;">SonicWall Traffic</span><div style="left:247.9px;top:845.2px;width:51.29999999999998px;height:17.699999999999932px;background:#17313e;border-radius:4px;"></div><span style="left:252.3px;top:845.8px;font-size:12.5px;line-height:17px;color:#1a9fe3;letter-spacing:-0.091px;-webkit-text-stroke:.2px #1a9fe3;">34.35 K</span><svg style="left:112.7px;top:873.5999999999999px" width="10" height="14" viewBox="0 0 10 14" fill="none" stroke="#8fa3b8" stroke-width="1.300" stroke-linecap="round" stroke-linejoin="round"><path d="M2.600 2.200l4.900 4.800-4.900 4.800"/></svg><span style="left:134.2px;top:870.8px;font-size:14px;line-height:20px;color:#dcdcdc;letter-spacing:0.09px;-webkit-text-stroke:0.25px #dcdcdc;">Palo Alto Traffic</span><div style="left:240.9px;top:872.2px;width:50.29999999999998px;height:17.699999999999932px;background:#17313e;border-radius:4px;"></div><span style="left:245.3px;top:872.8px;font-size:12.5px;line-height:17px;color:#1a9fe3;transform:scaleX(0.9854);transform-origin:0 50%;letter-spacing:-0.15px;-webkit-text-stroke:.2px #1a9fe3;">33.22 K</span><svg style="left:112.7px;top:900.5999999999999px" width="10" height="14" viewBox="0 0 10 14" fill="none" stroke="#8fa3b8" stroke-width="1.300" stroke-linecap="round" stroke-linejoin="round"><path d="M2.600 2.200l4.900 4.800-4.900 4.800"/></svg><span style="left:134.2px;top:897.8px;font-size:14px;line-height:20px;color:#dcdcdc;letter-spacing:0.147px;-webkit-text-stroke:0.25px #dcdcdc;">Fortinet Traffic</span><div style="left:233.9px;top:899.2px;width:50.79999999999998px;height:17.699999999999932px;background:#17313e;border-radius:4px;"></div><span style="left:238.3px;top:899.8px;font-size:12.5px;line-height:17px;color:#1a9fe3;transform:scaleX(0.9972);transform-origin:0 50%;letter-spacing:-0.15px;-webkit-text-stroke:.2px #1a9fe3;">27.98 K</span><svg style="left:112.7px;top:927.5999999999999px" width="10" height="14" viewBox="0 0 10 14" fill="none" stroke="#8fa3b8" stroke-width="1.300" stroke-linecap="round" stroke-linejoin="round"><path d="M2.600 2.200l4.900 4.800-4.900 4.800"/></svg><span style="left:134.2px;top:924.8px;font-size:14px;line-height:20px;color:#dcdcdc;letter-spacing:0.288px;-webkit-text-stroke:0.25px #dcdcdc;">Fortinet utm</span><div style="left:220.4px;top:926.2px;width:43.79999999999998px;height:17.699999999999932px;background:#17313e;border-radius:4px;"></div><span style="left:224.8px;top:926.8px;font-size:12.5px;line-height:17px;color:#1a9fe3;transform:scaleX(0.9911);transform-origin:0 50%;letter-spacing:-0.15px;-webkit-text-stroke:.2px #1a9fe3;">2.97 K</span><svg style="left:112.7px;top:954.5999999999999px" width="10" height="14" viewBox="0 0 10 14" fill="none" stroke="#8fa3b8" stroke-width="1.300" stroke-linecap="round" stroke-linejoin="round"><path d="M2.600 2.200l4.900 4.800-4.900 4.800"/></svg><span style="left:134.2px;top:951.8px;font-size:14px;line-height:20px;color:#dcdcdc;letter-spacing:0.19px;-webkit-text-stroke:0.25px #dcdcdc;">SonicWall Activity</span><div style="left:254.9px;top:953.2px;width:30.299999999999983px;height:17.699999999999932px;background:#17313e;border-radius:4px;"></div><span style="left:259.3px;top:953.8px;font-size:12.5px;line-height:17px;color:#1a9fe3;letter-spacing:0.257px;-webkit-text-stroke:.2px #1a9fe3;">344</span><svg style="left:112.7px;top:981.5999999999999px" width="10" height="14" viewBox="0 0 10 14" fill="none" stroke="#8fa3b8" stroke-width="1.300" stroke-linecap="round" stroke-linejoin="round"><path d="M2.600 2.200l4.900 4.800-4.900 4.800"/></svg><span style="left:134.2px;top:978.8px;font-size:14px;line-height:20px;color:#dcdcdc;letter-spacing:0.043px;-webkit-text-stroke:0.25px #dcdcdc;">Palo Alto System</span><div style="left:248.9px;top:980.2px;width:27.299999999999983px;height:17.699999999999932px;background:#17313e;border-radius:4px;"></div><span style="left:253.3px;top:980.8px;font-size:12.5px;line-height:17px;color:#1a9fe3;transform:scaleX(0.9032);transform-origin:0 50%;letter-spacing:-0.15px;-webkit-text-stroke:.2px #1a9fe3;">196</span><svg style="left:112.7px;top:1008.5999999999999px" width="10" height="14" viewBox="0 0 10 14" fill="none" stroke="#8fa3b8" stroke-width="1.300" stroke-linecap="round" stroke-linejoin="round"><path d="M2.600 2.200l4.900 4.800-4.900 4.800"/></svg><span style="left:134.2px;top:1005.8px;font-size:14px;line-height:20px;color:#dcdcdc;letter-spacing:0.113px;-webkit-text-stroke:0.25px #dcdcdc;">SonicWall Debug</span><div style="left:250.9px;top:1007.2px;width:22.799999999999983px;height:17.700000000000045px;background:#17313e;border-radius:4px;"></div><span style="left:255.3px;top:1007.8px;font-size:12.5px;line-height:17px;color:#1a9fe3;letter-spacing:0.064px;-webkit-text-stroke:.2px #1a9fe3;">26</span><svg style="left:112.7px;top:1035.6px" width="10" height="14" viewBox="0 0 10 14" fill="none" stroke="#8fa3b8" stroke-width="1.300" stroke-linecap="round" stroke-linejoin="round"><path d="M2.600 2.200l4.900 4.800-4.900 4.800"/></svg><span style="left:134.2px;top:1032.8px;font-size:14px;line-height:20px;color:#dcdcdc;letter-spacing:0.091px;-webkit-text-stroke:0.25px #dcdcdc;">SonicWall</span><div style="left:204.9px;top:1034.2px;width:19.799999999999983px;height:17.700000000000045px;background:#17313e;border-radius:4px;"></div><span style="left:209.3px;top:1034.8px;font-size:12.5px;line-height:17px;color:#1a9fe3;transform:scaleX(0.8041);transform-origin:0 50%;letter-spacing:-0.15px;-webkit-text-stroke:.2px #1a9fe3;">16</span><svg style="left:90.7px;top:1064.8px" width="14" height="10" viewBox="0 0 14 10" fill="none" stroke="#8fa3b8" stroke-width="1.300" stroke-linecap="round" stroke-linejoin="round"><path d="M2.200 2.700l4.800 4.800 4.800-4.800"/></svg><svg style="left:115px;top:1059.5px" width="20" height="20" viewBox="0 0 20 20" fill="none"><rect x="0.300" y="0.300" width="19.400" height="19.400" rx="3" fill="#1ab5ea"/><path d="M4.500 4.500c4 1.500 7 6.500 11 11M15.500 4.500c-4 1.500-7 6.500-11 11" stroke="#d9f3fc" stroke-width="1.200"/><g fill="#fff"><circle cx="4.500" cy="4.500" r="1.200"/><circle cx="15.500" cy="4.500" r="1.200"/><circle cx="4.500" cy="15.500" r="1.200"/><circle cx="15.500" cy="15.500" r="1.200"/></g></svg><span style="left:138.2px;top:1059.8px;font-size:14px;line-height:20px;color:#dcdcdc;letter-spacing:0.139px;-webkit-text-stroke:0.25px #dcdcdc;">Switch</span><div style="left:188.4px;top:1061.2px;width:57.29999999999998px;height:17.700000000000045px;background:#17313e;border-radius:4px;"></div><span style="left:192.8px;top:1061.8px;font-size:12.5px;line-height:17px;color:#1a9fe3;transform:scaleX(0.9915);transform-origin:0 50%;letter-spacing:-0.15px;-webkit-text-stroke:.2px #1a9fe3;">169.44 K</span><svg style="left:112.7px;top:1089.6px" width="10" height="14" viewBox="0 0 10 14" fill="none" stroke="#8fa3b8" stroke-width="1.300" stroke-linecap="round" stroke-linejoin="round"><path d="M2.600 2.200l4.900 4.800-4.900 4.800"/></svg><span style="left:134.2px;top:1086.8px;font-size:14px;line-height:20px;color:#dcdcdc;letter-spacing:0.203px;-webkit-text-stroke:0.25px #dcdcdc;">Cisco Device Configuration Update</span><svg style="left:112.7px;top:1116.6px" width="10" height="14" viewBox="0 0 10 14" fill="none" stroke="#8fa3b8" stroke-width="1.300" stroke-linecap="round" stroke-linejoin="round"><path d="M2.600 2.200l4.900 4.800-4.900 4.800"/></svg><span style="left:134.2px;top:1113.8px;font-size:14px;line-height:20px;color:#dcdcdc;letter-spacing:0.113px;-webkit-text-stroke:0.25px #dcdcdc;">Cisco Switch Config Change Log</span><div style="left:350.4px;top:1115.2px;width:22.80000000000001px;height:17.700000000000045px;background:#17313e;border-radius:4px;"></div><span style="left:354.8px;top:1115.8px;font-size:12.5px;line-height:17px;color:#1a9fe3;letter-spacing:0.064px;-webkit-text-stroke:.2px #1a9fe3;">26</span><svg style="left:112.7px;top:1143.6px" width="10" height="14" viewBox="0 0 10 14" fill="none" stroke="#8fa3b8" stroke-width="1.300" stroke-linecap="round" stroke-linejoin="round"><path d="M2.600 2.200l4.900 4.800-4.900 4.800"/></svg><span style="left:134.2px;top:1140.8px;font-size:14px;line-height:20px;color:#dcdcdc;letter-spacing:0.155px;-webkit-text-stroke:0.25px #dcdcdc;">Cisco Device Interface State Update</span><svg style="left:112.7px;top:1170.6px" width="10" height="14" viewBox="0 0 10 14" fill="none" stroke="#8fa3b8" stroke-width="1.300" stroke-linecap="round" stroke-linejoin="round"><path d="M2.600 2.200l4.900 4.800-4.900 4.800"/></svg><span style="left:134.2px;top:1167.8px;font-size:14px;line-height:20px;color:#dcdcdc;letter-spacing:0.071px;-webkit-text-stroke:0.25px #dcdcdc;">Cisco Device Packets Destined Audit</span><svg style="left:112.7px;top:1197.6px" width="10" height="14" viewBox="0 0 10 14" fill="none" stroke="#8fa3b8" stroke-width="1.300" stroke-linecap="round" stroke-linejoin="round"><path d="M2.600 2.200l4.900 4.800-4.900 4.800"/></svg><span style="left:134.2px;top:1194.8px;font-size:14px;line-height:20px;color:#dcdcdc;letter-spacing:0.227px;-webkit-text-stroke:0.25px #dcdcdc;">Cisco Device BGP Audit</span><div style="left:297.2px;top:1196.2px;width:47.80000000000001px;height:17.700000000000045px;background:#17313e;border-radius:4px;"></div><span style="left:301.6px;top:1196.8px;font-size:12.5px;line-height:17px;color:#1a9fe3;transform:scaleX(0.926);transform-origin:0 50%;letter-spacing:-0.15px;-webkit-text-stroke:.2px #1a9fe3;">21.04 K</span></div></aside>
<main style="left:0;top:0;width:1919px;height:1199px"><div style="left:388px;top:107px;width:278px;height:32px;border:1px solid #3a3a3a;box-sizing:border-box;border-radius:4px;"></div>
<div style="left:388px;top:107px;width:43px;height:32px;background:#0b8bc4;border-radius:4px 0 0 4px;"></div>
<div style="left:431px;top:108px;width:1px;height:30px;background:#3a3a3a;"></div>
<div style="left:489px;top:108px;width:1px;height:30px;background:#3a3a3a;"></div>
<div style="left:540px;top:108px;width:1px;height:30px;background:#3a3a3a;"></div>
<div style="left:598px;top:108px;width:1px;height:30px;background:#3a3a3a;"></div>
<span style="left:399.3px;top:112.8px;font-size:14px;line-height:20px;color:#fff;transform:scaleX(0.9641);transform-origin:0 50%;letter-spacing:-0.15px;">List</span>
<span style="left:442.3px;top:112.8px;font-size:14px;line-height:20px;color:#8fa3b5;letter-spacing:0.503px;">Chart</span>
<span style="left:501.5px;top:112.8px;font-size:14px;line-height:20px;color:#8fa3b5;letter-spacing:0.015px;">Grid</span>
<span style="left:551.3px;top:112.8px;font-size:14px;line-height:20px;color:#8fa3b5;letter-spacing:-0.127px;">Top N</span>
<span style="left:610.3px;top:112.8px;font-size:14px;line-height:20px;color:#8fa3b5;letter-spacing:0.326px;">Gauge</span>
<div style="left:1791px;top:106px;width:105px;height:34px;background:#3279be;border-radius:3px;"></div>
<span style="left:1806.5px;top:112.8px;font-size:14px;line-height:20px;color:#fff;letter-spacing:-0.045px;">Save Query</span>
<div style="left:387px;top:152px;width:1187px;height:32px;background:#222;border:1px solid #383838;box-sizing:border-box;border-radius:4px;"></div>
<div style="left:422px;top:153px;width:1px;height:30px;background:#383838;"></div>
<svg style="left:396px;top:159px" width="18" height="18" viewBox="0 0 18 18" fill="none" stroke="#e6e6e6" stroke-width="1.300" stroke-linejoin="round"><path d="M1.800 2.200h14.400l-5.500 6.700v6.600l-3.400-1.800V8.900z"/></svg>
<span style="left:430.8px;top:157.8px;font-size:14px;line-height:20px;color:#dcdcdc;letter-spacing:0.025px;">Search</span>
<div style="left:1594px;top:156px;width:64px;height:24px;background:#2c2c2c;border:1px solid #383838;box-sizing:border-box;border-radius:3px;"></div>
<span style="left:1602px;top:158.5px;font-size:13.5px;line-height:19px;color:#9a9a9a;letter-spacing:0.034px;">Execute</span>
<div style="left:1675px;top:156px;width:84px;height:24px;border:1px solid #f0f0f0;box-sizing:border-box;border-radius:3px;"></div>
<svg style="left:1687px;top:159px" width="18" height="18" viewBox="0 0 18 18" fill="none" stroke="#f0f0f0" stroke-width="1.200" stroke-linecap="round"><circle cx="9" cy="8.700" r="7.300"/><path d="M7.300 6v5.400M10.700 6v5.400" stroke-width="1.400"/></svg>
<span style="left:1712.5px;top:158.0px;font-size:14px;line-height:20px;color:#fff;transform:scaleX(0.9994);transform-origin:0 50%;letter-spacing:-0.15px;">Pause</span>
<div style="left:1776px;top:157px;width:79px;height:22.5px;background:#fafafa;border-radius:3px;"></div>
<svg style="left:1787px;top:159px" width="18" height="18" viewBox="0 0 18 18" fill="none" stroke="#e8503c" stroke-width="1.300"><circle cx="9" cy="8.700" r="7.300"/><rect x="6.500" y="6.200" width="5" height="5" rx=".8" fill="#e8503c" stroke="none"/></svg>
<span style="left:1813.5px;top:158.0px;font-size:14px;line-height:20px;color:#e8503c;letter-spacing:0.12px;">Abort</span>
<div style="left:1864px;top:151px;width:31.5px;height:34px;background:#282828;border-radius:4px;"></div>
<svg style="left:1870.500px;top:157.500px" width="18" height="18" viewBox="0 0 18 18" fill="none" stroke="#e6e6e6" stroke-width="1.300" stroke-linecap="round" stroke-linejoin="round"><path d="M2 16L16 2" stroke-width="1.400"/><path d="M12 1.800h4.200v4.200zM6 16.200H1.800v-4.200z" fill="#e6e6e6" stroke-width=".8"/></svg>
<div style="left:1896px;top:148px;width:8px;height:426px;background:#444;border-radius:4px;"></div><svg style="left:380px;top:190px" width="1516" height="250" viewBox="380 190 1516 250"><path d="M428.500 201.4H1885" stroke="#303030" stroke-width="1"/><path d="M428.500 253.7H1885" stroke="#303030" stroke-width="1"/><path d="M428.500 306.0H1885" stroke="#303030" stroke-width="1"/><path d="M428.500 358.2H1885" stroke="#303030" stroke-width="1"/><path d="M428.500 410.5H1885" stroke="#303030" stroke-width="1"/><path d="M445.1 410.0V339.9h6V410.0zM457.2 410.0V333.9h6V410.0zM469.3 410.0V296.0h6V410.0zM481.4 410.0V340.8h6V410.0zM493.5 410.0V266.9h6V410.0zM505.6 410.0V338.0h6V410.0zM517.7 410.0V281.9h6V410.0zM529.9 410.0V336.9h6V410.0zM542.0 410.0V305.0h6V410.0zM554.1 410.0V339.9h6V410.0zM566.2 410.0V314.7h6V410.0zM578.3 410.0V336.9h6V410.0zM590.4 410.0V307.8h6V410.0zM602.5 410.0V330.9h6V410.0zM614.6 410.0V302.9h6V410.0zM626.7 410.0V330.0h6V410.0zM638.8 410.0V302.9h6V410.0zM650.9 410.0V332.0h6V410.0zM663.0 410.0V302.0h6V410.0zM675.1 410.0V342.0h6V410.0zM687.2 410.0V307.1h6V410.0zM699.4 410.0V333.9h6V410.0zM711.5 410.0V303.9h6V410.0zM723.6 410.0V332.0h6V410.0zM735.7 410.0V244.0h6V410.0zM747.8 410.0V336.9h6V410.0zM759.9 410.0V275.0h6V410.0zM772.0 410.0V333.9h6V410.0zM784.1 410.0V278.9h6V410.0zM796.2 410.0V339.0h6V410.0zM808.3 410.0V290.9h6V410.0zM820.4 410.0V330.9h6V410.0zM832.5 410.0V287.9h6V410.0zM844.6 410.0V351.0h6V410.0zM856.7 410.0V308.9h6V410.0zM868.9 410.0V330.9h6V410.0zM881.0 410.0V296.0h6V410.0zM893.1 410.0V333.0h6V410.0zM905.2 410.0V318.9h6V410.0zM917.3 410.0V327.9h6V410.0zM929.4 410.0V287.0h6V410.0zM941.5 410.0V332.0h6V410.0zM953.6 410.0V303.9h6V410.0zM965.7 410.0V333.9h6V410.0zM977.8 410.0V259.9h6V410.0zM989.9 410.0V342.0h6V410.0zM1002.0 410.0V290.0h6V410.0zM1014.1 410.0V339.0h6V410.0zM1026.2 410.0V288.8h6V410.0zM1038.3 410.0V333.9h6V410.0zM1050.5 410.0V302.0h6V410.0zM1062.6 410.0V336.0h6V410.0zM1074.7 410.0V291.9h6V410.0zM1086.8 410.0V336.9h6V410.0zM1098.9 410.0V296.9h6V410.0zM1111.0 410.0V335.0h6V410.0zM1123.1 410.0V311.0h6V410.0zM1135.2 410.0V338.0h6V410.0zM1147.3 410.0V299.0h6V410.0zM1159.4 410.0V344.0h6V410.0zM1171.5 410.0V311.0h6V410.0zM1183.6 410.0V342.0h6V410.0zM1195.7 410.0V302.9h6V410.0zM1207.8 410.0V345.0h6V410.0zM1220.0 410.0V225.0h6V410.0zM1232.1 410.0V338.0h6V410.0zM1244.2 410.0V278.9h6V410.0zM1256.3 410.0V335.0h6V410.0zM1268.4 410.0V288.8h6V410.0zM1280.5 410.0V336.0h6V410.0zM1292.6 410.0V281.0h6V410.0zM1304.7 410.0V336.0h6V410.0zM1316.8 410.0V291.9h6V410.0zM1328.9 410.0V339.0h6V410.0zM1341.0 410.0V301.0h6V410.0zM1353.1 410.0V338.0h6V410.0zM1365.2 410.0V305.0h6V410.0zM1377.3 410.0V332.0h6V410.0zM1389.5 410.0V299.9h6V410.0zM1401.6 410.0V341.0h6V410.0zM1413.7 410.0V302.0h6V410.0zM1425.8 410.0V329.0h6V410.0zM1437.9 410.0V309.9h6V410.0zM1450.0 410.0V338.0h6V410.0zM1462.1 410.0V262.0h6V410.0zM1474.2 410.0V339.0h6V410.0zM1486.3 410.0V285.1h6V410.0zM1498.4 410.0V332.0h6V410.0zM1510.5 410.0V301.0h6V410.0zM1522.6 410.0V336.0h6V410.0zM1534.7 410.0V299.0h6V410.0zM1546.8 410.0V329.0h6V410.0zM1559.0 410.0V285.1h6V410.0zM1571.1 410.0V333.0h6V410.0zM1583.2 410.0V288.8h6V410.0zM1595.3 410.0V335.0h6V410.0zM1607.4 410.0V299.0h6V410.0zM1619.5 410.0V333.9h6V410.0zM1631.6 410.0V318.9h6V410.0zM1643.7 410.0V333.9h6V410.0zM1655.8 410.0V297.9h6V410.0zM1667.9 410.0V344.0h6V410.0zM1680.0 410.0V305.0h6V410.0zM1692.1 410.0V332.0h6V410.0zM1704.2 410.0V244.0h6V410.0zM1716.3 410.0V330.9h6V410.0zM1728.4 410.0V280.0h6V410.0zM1740.6 410.0V336.9h6V410.0zM1752.7 410.0V287.0h6V410.0zM1764.8 410.0V342.0h6V410.0zM1776.9 410.0V395.1h6V410.0zM1789.0 410.0V406.2h6V410.0zM1801.1 410.0V405.0h6V410.0zM1813.2 410.0V406.2h6V410.0zM1825.3 410.0V405.0h6V410.0zM1837.4 410.0V406.2h6V410.0zM1849.5 410.0V406.2h6V410.0z" fill="#0d9fde"/><text y="205.0" font-size="10.2" fill="#e6e6e6" stroke="#e6e6e6" stroke-width=".3"><tspan x="400.600">1</tspan><tspan x="406.200">K</tspan></text><text x="394.8" y="257.3" textLength="18" font-size="10.2" fill="#e6e6e6" stroke="#e6e6e6" stroke-width=".3" lengthAdjust="spacing">750</text><text x="393.8" y="309.6" textLength="19" font-size="10.2" fill="#e6e6e6" stroke="#e6e6e6" stroke-width=".3" lengthAdjust="spacing">500</text><text x="394.1" y="361.8" textLength="18.7" font-size="10.2" fill="#e6e6e6" stroke="#e6e6e6" stroke-width=".3" lengthAdjust="spacing">250</text><text x="406.6" y="414.1" textLength="6.2" font-size="10.2" fill="#e6e6e6" stroke="#e6e6e6" stroke-width=".3" lengthAdjust="spacing">0</text><text x="423.9" y="428.200" textLength="24.800" font-size="10.2" fill="#e6e6e6" stroke="#e6e6e6" stroke-width=".3" lengthAdjust="spacing">10:24</text><text x="520.8" y="428.200" textLength="24.800" font-size="10.2" fill="#e6e6e6" stroke="#e6e6e6" stroke-width=".3" lengthAdjust="spacing">10:26</text><text x="617.6" y="428.200" textLength="24.800" font-size="10.2" fill="#e6e6e6" stroke="#e6e6e6" stroke-width=".3" lengthAdjust="spacing">10:28</text><text x="714.5" y="428.200" textLength="24.800" font-size="10.2" fill="#e6e6e6" stroke="#e6e6e6" stroke-width=".3" lengthAdjust="spacing">10:30</text><text x="811.3" y="428.200" textLength="24.800" font-size="10.2" fill="#e6e6e6" stroke="#e6e6e6" stroke-width=".3" lengthAdjust="spacing">10:32</text><text x="908.2" y="428.200" textLength="24.800" font-size="10.2" fill="#e6e6e6" stroke="#e6e6e6" stroke-width=".3" lengthAdjust="spacing">10:34</text><text x="1005.0" y="428.200" textLength="24.800" font-size="10.2" fill="#e6e6e6" stroke="#e6e6e6" stroke-width=".3" lengthAdjust="spacing">10:36</text><text x="1101.9" y="428.200" textLength="24.800" font-size="10.2" fill="#e6e6e6" stroke="#e6e6e6" stroke-width=".3" lengthAdjust="spacing">10:38</text><text x="1198.7" y="428.200" textLength="24.800" font-size="10.2" fill="#e6e6e6" stroke="#e6e6e6" stroke-width=".3" lengthAdjust="spacing">10:40</text><text x="1295.6" y="428.200" textLength="24.800" font-size="10.2" fill="#e6e6e6" stroke="#e6e6e6" stroke-width=".3" lengthAdjust="spacing">10:42</text><text x="1392.5" y="428.200" textLength="24.800" font-size="10.2" fill="#e6e6e6" stroke="#e6e6e6" stroke-width=".3" lengthAdjust="spacing">10:44</text><text x="1489.3" y="428.200" textLength="24.800" font-size="10.2" fill="#e6e6e6" stroke="#e6e6e6" stroke-width=".3" lengthAdjust="spacing">10:46</text><text x="1586.2" y="428.200" textLength="24.800" font-size="10.2" fill="#e6e6e6" stroke="#e6e6e6" stroke-width=".3" lengthAdjust="spacing">10:48</text><text x="1683.0" y="428.200" textLength="24.800" font-size="10.2" fill="#e6e6e6" stroke="#e6e6e6" stroke-width=".3" lengthAdjust="spacing">10:50</text><text x="1779.9" y="428.200" textLength="24.800" font-size="10.2" fill="#e6e6e6" stroke="#e6e6e6" stroke-width=".3" lengthAdjust="spacing">10:52</text></svg><span style="left:387.3px;top:459.5px;font-size:14.5px;line-height:20px;color:#e0e0e0;transform:scaleX(0.9481);transform-origin:0 50%;letter-spacing:-0.15px;">Event Log</span>
<span style="left:467.7px;top:459.5px;font-size:14.5px;line-height:20px;color:#1a9fe3;transform:scaleX(0.9905);transform-origin:0 50%;letter-spacing:-0.15px;">Log Pattern</span>
<div style="left:388px;top:490px;width:1500px;height:1px;background:#333;"></div>
<div style="left:468px;top:487px;width:73px;height:3px;background:#1a9fe3;"></div>
<svg style="left:1465px;top:463px" width="16" height="16" viewBox="0 0 16 16" fill="none" stroke="#8cc63f" stroke-width="1.300" stroke-linecap="round" stroke-linejoin="round"><circle cx="8.200" cy="7.800" r="6.600"/><path d="M5.200 8l2.100 2.100 3.800-4.200"/></svg>
<span style="left:1491px;top:459.5px;font-size:15px;line-height:21px;color:#f2f2f2;letter-spacing:0.25px;">373 patterns found from 100000 logs</span>
<div style="left:1761px;top:452px;width:127px;height:34px;background:#3279be;border-radius:3px;"></div>
<span style="left:1776.8px;top:458.8px;font-size:14px;line-height:20px;color:#fff;letter-spacing:-0.089px;">Save as Report</span>
<div style="left:387px;top:499px;width:1508px;height:1px;background:#383838;"></div>
<div style="left:387px;top:526px;width:1508px;height:1px;background:#3d3d3d;"></div>
<span style="left:395.3px;top:505.0px;font-size:12px;line-height:17px;color:#e4e4e4;font-weight:700;letter-spacing:0.23px;">COUNT</span>
<svg style="left:442px;top:507px" width="10" height="13" viewBox="442 507 10 13"><path d="M446.800 508v7" stroke="#dbe6ef" stroke-width="1.100"/><path d="M443.400 514.300h6.800l-3.400 4.900z" fill="#dbe6ef"/></svg>
<span style="left:515.3px;top:505.0px;font-size:12px;line-height:17px;color:#e4e4e4;transform:scaleX(0.9738);transform-origin:0 50%;font-weight:700;letter-spacing:-0.15px;">SEVERITY</span>
<span style="left:665.2px;top:505.0px;font-size:12px;line-height:17px;color:#e4e4e4;font-weight:700;letter-spacing:-0.075px;">PATTERN</span>
<div style="left:387px;top:566px;width:1508px;height:1px;background:#2c2c2c;"></div>
<span style="left:395.3px;top:537.7px;font-size:11.5px;line-height:17px;color:#e4e4e4;transform:scaleX(0.9568);transform-origin:0 50%;letter-spacing:-0.15px;">22.77 K</span>
<span style="left:515.3px;top:537.2px;font-size:12.5px;line-height:18px;color:#e4e4e4;letter-spacing:0.299px;">Informational</span>
<div class="pl" style="top:536.2px;height:20px;line-height:20px;font-size:12.5px;color:#e4e4e4;white-space:pre;left:665.2px;"><span style="letter-spacing:0.613px"><span class="hl" style="width:21px;letter-spacing:0.2px;text-indent:0.1px">*IP*</span> - - [03/apr/</span><span style="letter-spacing:0.134px"><span class="hl" style="width:27.1px;letter-spacing:0.8px;text-indent:0.4px">*****</span> +0530] </span><span style="letter-spacing:-0.381px"><span class="hl" style="width:27.1px;letter-spacing:0.8px;text-indent:0.4px">*****</span> 200 </span><span style="letter-spacing:0.125px"><span class="hl" style="width:35.4px;letter-spacing:0px;text-indent:0.0px">*NUM*</span> </span><span style="letter-spacing:0.125px"><span class="hl" style="width:27.1px;letter-spacing:0.8px;text-indent:0.4px">*****</span> </span><span style="letter-spacing:0.6px"><span class="hl" style="width:27.1px;letter-spacing:0.8px;text-indent:0.4px">*****</span></span></div>
<div style="left:387px;top:606px;width:1508px;height:1px;background:#2c2c2c;"></div>
<span style="left:395.3px;top:577.7px;font-size:11.5px;line-height:17px;color:#e4e4e4;transform:scaleX(0.8944);transform-origin:0 50%;letter-spacing:-0.15px;">6.31 K</span>
<span style="left:515.3px;top:577.2px;font-size:12.5px;line-height:18px;color:#e4e4e4;letter-spacing:0.103px;">Notice</span>
<div class="pl" style="top:576.2px;height:20px;line-height:20px;font-size:12.5px;color:#e4e4e4;white-space:pre;left:665.2px;"><span style="letter-spacing:-0.451px">&lt;45&gt;</span><span style="letter-spacing:0.003px"><span class="hl" style="width:27.1px;letter-spacing:0.8px;text-indent:0.4px">*****</span> *jun 40 </span><span style="letter-spacing:0.077px"><span class="hl" style="width:27.1px;letter-spacing:0.8px;text-indent:0.4px">*****</span> ist: %sys-5-config_i: configured from console by </span><span style="letter-spacing:-0.137px"><span class="hl" style="width:27.1px;letter-spacing:0.8px;text-indent:0.4px">*****</span> on </span><span style="letter-spacing:0.132px"><span class="hl" style="width:27.1px;letter-spacing:0.8px;text-indent:0.4px">*****</span> (</span><span style="letter-spacing:0.236px"><span class="hl" style="width:21px;letter-spacing:0.2px;text-indent:0.1px">*IP*</span>)</span></div>
<div style="left:387px;top:646px;width:1508px;height:1px;background:#2c2c2c;"></div>
<span style="left:395.3px;top:617.7px;font-size:11.5px;line-height:17px;color:#e4e4e4;transform:scaleX(0.879);transform-origin:0 50%;letter-spacing:-0.15px;">4.71 K</span>
<span style="left:515.3px;top:617.2px;font-size:12.5px;line-height:18px;color:#e4e4e4;letter-spacing:0.103px;">Notice</span>
<div class="pl" style="top:616.2px;height:20px;line-height:20px;font-size:12.5px;color:#e4e4e4;white-space:pre;left:665.2px;"><span style="letter-spacing:-0.451px">&lt;45&gt;</span><span style="letter-spacing:0.003px"><span class="hl" style="width:27.1px;letter-spacing:0.8px;text-indent:0.4px">*****</span> *jun 40 </span><span style="letter-spacing:0.077px"><span class="hl" style="width:27.1px;letter-spacing:0.8px;text-indent:0.4px">*****</span> ist: %sys-5-config_i: configured from console by </span><span style="letter-spacing:-0.137px"><span class="hl" style="width:27.1px;letter-spacing:0.8px;text-indent:0.4px">*****</span> on </span><span style="letter-spacing:0.132px"><span class="hl" style="width:27.1px;letter-spacing:0.8px;text-indent:0.4px">*****</span> (</span><span style="letter-spacing:0.236px"><span class="hl" style="width:21px;letter-spacing:0.2px;text-indent:0.1px">*IP*</span>)</span></div>
<div style="left:387px;top:686px;width:1508px;height:1px;background:#2c2c2c;"></div>
<span style="left:395.3px;top:657.7px;font-size:11.5px;line-height:17px;color:#e4e4e4;letter-spacing:-0.136px;">2.94 K</span>
<span style="left:515.3px;top:657.2px;font-size:12.5px;line-height:18px;color:#e4e4e4;transform:scaleX(0.9554);transform-origin:0 50%;letter-spacing:-0.15px;">5</span>
<div class="pl" style="top:656.2px;height:20px;line-height:20px;font-size:12.5px;color:#e4e4e4;white-space:pre;left:665.2px;"><span style="letter-spacing:-0.451px">&lt;45&gt;</span><span style="letter-spacing:0.003px"><span class="hl" style="width:27.1px;letter-spacing:0.8px;text-indent:0.4px">*****</span> *jun 40 </span><span style="letter-spacing:0.077px"><span class="hl" style="width:27.1px;letter-spacing:0.8px;text-indent:0.4px">*****</span> ist: %sys-5-config_i: configured from console by </span><span style="letter-spacing:-0.137px"><span class="hl" style="width:27.1px;letter-spacing:0.8px;text-indent:0.4px">*****</span> on </span><span style="letter-spacing:-0.118px"><span class="hl" style="width:27.1px;letter-spacing:0.8px;text-indent:0.4px">*****</span> (</span><span style="letter-spacing:1.336px"><span class="hl" style="width:27.1px;letter-spacing:0.8px;text-indent:0.4px">*****</span>)</span></div>
<div style="left:387px;top:726px;width:1508px;height:1px;background:#2c2c2c;"></div>
<span style="left:395.3px;top:697.7px;font-size:11.5px;line-height:17px;color:#e4e4e4;transform:scaleX(0.9869);transform-origin:0 50%;letter-spacing:-0.15px;">2.92 K</span>
<span style="left:515.3px;top:697.2px;font-size:12.5px;line-height:18px;color:#e4e4e4;letter-spacing:0.103px;">Notice</span>
<div class="pl" style="top:696.2px;height:20px;line-height:20px;font-size:12.5px;color:#e4e4e4;white-space:pre;left:665.2px;"><span style="letter-spacing:-0.451px">&lt;45&gt;</span><span style="letter-spacing:0.003px"><span class="hl" style="width:27.1px;letter-spacing:0.8px;text-indent:0.4px">*****</span> *jun 40 </span><span style="letter-spacing:0.077px"><span class="hl" style="width:27.1px;letter-spacing:0.8px;text-indent:0.4px">*****</span> ist: %sys-5-config_i: configured from console by </span><span style="letter-spacing:-0.137px"><span class="hl" style="width:27.1px;letter-spacing:0.8px;text-indent:0.4px">*****</span> on </span><span style="letter-spacing:-0.118px"><span class="hl" style="width:27.1px;letter-spacing:0.8px;text-indent:0.4px">*****</span> (</span><span style="letter-spacing:1.336px"><span class="hl" style="width:27.1px;letter-spacing:0.8px;text-indent:0.4px">*****</span>)</span></div>
<div style="left:387px;top:766px;width:1508px;height:1px;background:#2c2c2c;"></div>
<span style="left:395.3px;top:737.7px;font-size:11.5px;line-height:17px;color:#e4e4e4;letter-spacing:-0.136px;">2.85 K</span>
<span style="left:515.3px;top:737.2px;font-size:12.5px;line-height:18px;color:#e4e4e4;letter-spacing:0.036px;">Debug</span>
<div class="pl" style="top:736.2px;height:20px;line-height:20px;font-size:12.5px;color:#e4e4e4;white-space:pre;left:665.2px;"><span style="letter-spacing:-0.215px">&lt;167&gt; esxi-test01.local rhttpproxy: </span><span style="letter-spacing:0.173px"><span class="hl" style="width:27.1px;letter-spacing:0.8px;text-indent:0.4px">*****</span> rhttpproxy[</span><span style="letter-spacing:0.129px"><span class="hl" style="width:35.4px;letter-spacing:0px;text-indent:0.0px">*NUM*</span>] [originator@6876 sub=proxy req </span><span style="letter-spacing:0.093px"><span class="hl" style="width:35.4px;letter-spacing:0px;text-indent:0.0px">*NUM*</span>] resolved endpoint : [n7vmacore4http16localservicespece:</span><span style="letter-spacing:0.324px"><span class="hl" style="width:31px;letter-spacing:-0.3px;text-indent:-0.15px">*HEX*</span>] _servernamespace = /</span><span style="letter-spacing:0.083px"><span class="hl" style="width:27.1px;letter-spacing:0.8px;text-indent:0.4px">*****</span> action = </span><span style="letter-spacing:0.211px"><span class="hl" style="width:27.1px;letter-spacing:0.8px;text-indent:0.4px">*****</span> _port = 443</span></div>
<div style="left:387px;top:806px;width:1508px;height:1px;background:#2c2c2c;"></div>
<span style="left:395.3px;top:777.7px;font-size:11.5px;line-height:17px;color:#e4e4e4;letter-spacing:-0.136px;">2.85 K</span>
<span style="left:515.3px;top:777.2px;font-size:12.5px;line-height:18px;color:#e4e4e4;letter-spacing:0.299px;">Informational</span>
<div class="pl" style="top:776.2px;height:20px;line-height:20px;font-size:12.5px;color:#e4e4e4;white-space:pre;left:665.2px;"><span style="letter-spacing:-0.05px">&lt;134&gt;1 localhost dnsmasq - - - apr 03 </span><span style="letter-spacing:0.245px"><span class="hl" style="width:27.1px;letter-spacing:0.8px;text-indent:0.4px">*****</span> dnsmasq[2059]:</span><span style="letter-spacing:0.245px"> query[a] example.com from <span class="hl" style="width:21px;letter-spacing:0.2px;text-indent:0.1px">*IP*</span></span></div>
<div style="left:387px;top:846px;width:1508px;height:1px;background:#2c2c2c;"></div>
<span style="left:395.3px;top:817.7px;font-size:11.5px;line-height:17px;color:#e4e4e4;letter-spacing:-0.136px;">2.06 K</span>
<span style="left:515.3px;top:817.2px;font-size:12.5px;line-height:18px;color:#e4e4e4;letter-spacing:0.299px;">Informational</span>
<div class="pl" style="top:816.2px;height:20px;line-height:20px;font-size:12.5px;color:#e4e4e4;white-space:pre;left:665.2px;"><span style="letter-spacing:0.124px">allow </span><span style="letter-spacing:-0.575px"><span class="hl" style="width:27.1px;letter-spacing:0.8px;text-indent:0.4px">*****</span> </span><span style="letter-spacing:-1.2px"><span class="hl" style="width:21px;letter-spacing:0.2px;text-indent:0.1px">*IP*</span> </span><span style="letter-spacing:-1.2px"><span class="hl" style="width:21px;letter-spacing:0.2px;text-indent:0.1px">*IP*</span> </span><span style="letter-spacing:0.525px"><span class="hl" style="width:27.1px;letter-spacing:0.8px;text-indent:0.4px">*****</span> </span><span style="letter-spacing:0.469px"><span class="hl" style="width:27.1px;letter-spacing:0.8px;text-indent:0.4px">*****</span> 0 - - - - - - - send</span></div>
<div style="left:387px;top:886px;width:1508px;height:1px;background:#2c2c2c;"></div>
<span style="left:395.3px;top:857.7px;font-size:11.5px;line-height:17px;color:#e4e4e4;transform:scaleX(0.8944);transform-origin:0 50%;letter-spacing:-0.15px;">1.63 K</span>
<span style="left:515.3px;top:857.2px;font-size:12.5px;line-height:18px;color:#e4e4e4;letter-spacing:0.103px;">Notice</span>
<div class="pl" style="top:856.2px;height:20px;line-height:20px;font-size:12.5px;color:#e4e4e4;white-space:pre;left:665.2px;"><span style="letter-spacing:-1.151px">&lt;189&gt;</span><span style="letter-spacing:0.425px"><span class="hl" style="width:27.1px;letter-spacing:0.8px;text-indent:0.4px">*****</span> </span><span style="letter-spacing:0.154px"><span class="hl" style="width:27.1px;letter-spacing:0.8px;text-indent:0.4px">*****</span> %lineproto-5-updown:</span><span style="letter-spacing:0.154px"> line protocol on interface <span class="hl" style="width:27.1px;letter-spacing:0.8px;text-indent:0.4px">*****</span>, changed state to <span class="hl" style="width:27.1px;letter-spacing:0.8px;text-indent:0.4px">*****</span></span></div>
<div style="left:387px;top:926px;width:1508px;height:1px;background:#2c2c2c;"></div>
<span style="left:395.3px;top:897.7px;font-size:11.5px;line-height:17px;color:#e4e4e4;transform:scaleX(0.8595);transform-origin:0 50%;letter-spacing:-0.15px;">1.6 K</span>
<span style="left:515.3px;top:897.2px;font-size:12.5px;line-height:18px;color:#e4e4e4;letter-spacing:0.103px;">Notice</span>
<div class="pl" style="top:896.2px;height:20px;line-height:20px;font-size:12.5px;color:#e4e4e4;white-space:pre;left:665.2px;"><span style="letter-spacing:-0.451px">&lt;45&gt;</span><span style="letter-spacing:0.003px"><span class="hl" style="width:27.1px;letter-spacing:0.8px;text-indent:0.4px">*****</span> *jun 40 </span><span style="letter-spacing:0.077px"><span class="hl" style="width:27.1px;letter-spacing:0.8px;text-indent:0.4px">*****</span> ist: %sys-5-config_i: configured from console by </span><span style="letter-spacing:0.077px"><span class="hl" style="width:27.1px;letter-spacing:0.8px;text-indent:0.4px">*****</span> on <span class="hl" style="width:27.1px;letter-spacing:0.8px;text-indent:0.4px">*****</span> (<span class="hl" style="width:21px;letter-spacing:0.2px;text-indent:0.1px">*IP*</span>)</span></div>
<div style="left:387px;top:966px;width:1508px;height:1px;background:#2c2c2c;"></div>
<span style="left:395.3px;top:937.7px;font-size:11.5px;line-height:17px;color:#e4e4e4;transform:scaleX(0.8944);transform-origin:0 50%;letter-spacing:-0.15px;">1.43 K</span>
<span style="left:515.3px;top:937.2px;font-size:12.5px;line-height:18px;color:#e4e4e4;letter-spacing:0.299px;">Informational</span>
<div class="pl" style="top:936.2px;height:20px;line-height:20px;font-size:12.5px;color:#e4e4e4;white-space:pre;left:665.2px;"><span style="letter-spacing:-0.246px">id=firewall sn=0017c5e89ab4 time=&quot;&quot; fw=115.110.66.162 pri=6 c=</span><span style="letter-spacing:-0.246px"><span class="hl" style="width:35.4px;letter-spacing:0px;text-indent:0.0px">*NUM*</span> m=<span class="hl" style="width:35.4px;letter-spacing:0px;text-indent:0.0px">*NUM*</span> msg=&quot;connection closed&quot; n=<span class="hl" style="width:35.4px;letter-spacing:0px;text-indent:0.0px">*NUM*</span></span></div>
<div style="left:387px;top:1006px;width:1508px;height:1px;background:#2c2c2c;"></div>
<span style="left:395.3px;top:977.7px;font-size:11.5px;line-height:17px;color:#e4e4e4;transform:scaleX(0.8944);transform-origin:0 50%;letter-spacing:-0.15px;">1.36 K</span>
<span style="left:515.3px;top:977.2px;font-size:12.5px;line-height:18px;color:#e4e4e4;letter-spacing:0.299px;">Informational</span>
<div class="pl" style="top:976.2px;height:20px;line-height:20px;font-size:12.5px;color:#e4e4e4;white-space:pre;left:665.2px;"><span style="letter-spacing:-0.312px">{ &quot;id&quot;: </span><span style="letter-spacing:-0.048px"><span class="hl" style="width:35.4px;letter-spacing:0px;text-indent:0.0px">*NUM*</span>, &quot;timestamp&quot;: </span><span style="letter-spacing:-0.276px"><span class="hl" style="width:27.1px;letter-spacing:0.8px;text-indent:0.4px">*****</span>, &quot;message&quot;: </span><span style="letter-spacing:-0.449px"><span class="hl" style="width:27.1px;letter-spacing:0.8px;text-indent:0.4px">*****</span>, &quot;source&quot;: </span><span style="letter-spacing:0.05px"><span class="hl" style="width:27.1px;letter-spacing:0.8px;text-indent:0.4px">*****</span>, &quot;level&quot;: <span class="hl" style="width:27.1px;letter-spacing:0.8px;text-indent:0.4px">*****</span> }</span></div>
<div style="left:387px;top:1046px;width:1508px;height:1px;background:#2c2c2c;"></div>
<span style="left:395.3px;top:1017.7px;font-size:11.5px;line-height:17px;color:#e4e4e4;transform:scaleX(0.9098);transform-origin:0 50%;letter-spacing:-0.15px;">1.34 K</span>
<span style="left:515.3px;top:1017.2px;font-size:12.5px;line-height:18px;color:#e4e4e4;letter-spacing:0.299px;">Informational</span>
<div class="pl" style="top:1016.2px;height:20px;line-height:20px;font-size:12.5px;color:#e4e4e4;white-space:pre;left:665.2px;"><span style="letter-spacing:0.308px">mindarray-pc7 postfix/qmgr[2035]: </span><span style="letter-spacing:-0.045px"><span class="hl" style="width:27.1px;letter-spacing:0.8px;text-indent:0.4px">*****</span> from=&lt;root@example.com&gt;, size=</span><span style="letter-spacing:0.068px"><span class="hl" style="width:35.4px;letter-spacing:0px;text-indent:0.0px">*NUM*</span>, nrcpt=1 (queue active)</span></div>
<div style="left:387px;top:1086px;width:1508px;height:1px;background:#2c2c2c;"></div>
<span style="left:395.3px;top:1057.7px;font-size:11.5px;line-height:17px;color:#e4e4e4;transform:scaleX(0.8404);transform-origin:0 50%;letter-spacing:-0.15px;">1.3 K</span>
<span style="left:515.3px;top:1057.2px;font-size:12.5px;line-height:18px;color:#e4e4e4;letter-spacing:0.103px;">Notice</span>
<div class="pl" style="top:1056.2px;height:20px;line-height:20px;font-size:12.5px;color:#e4e4e4;white-space:pre;left:665.2px;"><span style="letter-spacing:0.025px"><span class="hl" style="width:27.1px;letter-spacing:0.8px;text-indent:0.4px">*****</span> </span><span style="letter-spacing:0.056px"><span class="hl" style="width:27.1px;letter-spacing:0.8px;text-indent:0.4px">*****</span> *: %ospf-5-adjchg: process </span><span style="letter-spacing:-0.148px"><span class="hl" style="width:35.4px;letter-spacing:0px;text-indent:0.0px">*NUM*</span>, nbr </span><span style="letter-spacing:-0.237px"><span class="hl" style="width:21px;letter-spacing:0.2px;text-indent:0.1px">*IP*</span> on </span><span style="letter-spacing:0.059px"><span class="hl" style="width:27.1px;letter-spacing:0.8px;text-indent:0.4px">*****</span> from </span><span style="letter-spacing:0.132px"><span class="hl" style="width:27.1px;letter-spacing:0.8px;text-indent:0.4px">*****</span> to </span><span style="letter-spacing:-0.974px"><span class="hl" style="width:27.1px;letter-spacing:0.8px;text-indent:0.4px">*****</span>, </span><span style="letter-spacing:0.084px"><span class="hl" style="width:27.1px;letter-spacing:0.8px;text-indent:0.4px">*****</span> done</span></div>
<div style="left:387px;top:1126px;width:1508px;height:1px;background:#2c2c2c;"></div>
<span style="left:395.3px;top:1097.7px;font-size:11.5px;line-height:17px;color:#e4e4e4;transform:scaleX(0.8019);transform-origin:0 50%;letter-spacing:-0.15px;">1.14 K</span>
<span style="left:515.3px;top:1097.2px;font-size:12.5px;line-height:18px;color:#e4e4e4;letter-spacing:0.299px;">Informational</span>
<div class="pl" style="top:1096.2px;height:20px;line-height:20px;font-size:12.5px;color:#e4e4e4;white-space:pre;left:665.2px;"><span style="letter-spacing:-1.131px">&lt;190&gt;</span><span style="letter-spacing:0.325px"><span class="hl" style="width:27.1px;letter-spacing:0.8px;text-indent:0.4px">*****</span> </span><span style="letter-spacing:-0.014px"><span class="hl" style="width:27.1px;letter-spacing:0.8px;text-indent:0.4px">*****</span> %sec-6-ipaccesslogp: list 190 denied </span><span style="letter-spacing:-0.475px"><span class="hl" style="width:27.1px;letter-spacing:0.8px;text-indent:0.4px">*****</span> </span><span style="letter-spacing:-0.764px"><span class="hl" style="width:21px;letter-spacing:0.2px;text-indent:0.1px">*IP*</span>(</span><span style="letter-spacing:0.446px"><span class="hl" style="width:35.4px;letter-spacing:0px;text-indent:0.0px">*NUM*</span>) -&gt; </span><span style="letter-spacing:-0.264px"><span class="hl" style="width:21px;letter-spacing:0.2px;text-indent:0.1px">*IP*</span>(</span><span style="letter-spacing:-0.178px"><span class="hl" style="width:35.4px;letter-spacing:0px;text-indent:0.0px">*NUM*</span>), 1 packet</span></div>
<div style="left:387px;top:1166px;width:1508px;height:1px;background:#2c2c2c;"></div>
<span style="left:395.3px;top:1137.7px;font-size:11.5px;line-height:17px;color:#e4e4e4;transform:scaleX(0.9036);transform-origin:0 50%;letter-spacing:-0.15px;">919</span>
<span style="left:515.3px;top:1137.2px;font-size:12.5px;line-height:18px;color:#e4e4e4;letter-spacing:0.299px;">Informational</span>
<div class="pl" style="top:1136.2px;height:20px;line-height:20px;font-size:12.5px;color:#e4e4e4;white-space:pre;left:665.2px;"><span style="letter-spacing:0.395px">mindarray-pc7 postfix/smtp[</span><span style="letter-spacing:0.239px"><span class="hl" style="width:35.4px;letter-spacing:0px;text-indent:0.0px">*NUM*</span>]: connect to example.com[</span><span style="letter-spacing:-0.433px"><span class="hl" style="width:21px;letter-spacing:0.2px;text-indent:0.1px">*IP*</span>]:25: </span><span style="letter-spacing:-0.475px"><span class="hl" style="width:27.1px;letter-spacing:0.8px;text-indent:0.4px">*****</span> </span><span style="letter-spacing:-0.875px"><span class="hl" style="width:27.1px;letter-spacing:0.8px;text-indent:0.4px">*****</span> </span><span style="letter-spacing:0.5px"><span class="hl" style="width:27.1px;letter-spacing:0.8px;text-indent:0.4px">*****</span></span></div>
<span style="left:395.3px;top:1178.0px;font-size:11.5px;line-height:17px;color:#e4e4e4;letter-spacing:-0.076px;">892</span>
<span style="left:515.3px;top:1177.5px;font-size:12.5px;line-height:18px;color:#e4e4e4;letter-spacing:0.299px;">Informational</span>
<div class="pl" style="top:936.2px;height:20px;line-height:20px;font-size:12.5px;color:#e4e4e4;white-space:pre;left:1352.9px;"><span style="letter-spacing:0.313px"><span class="hl" style="width:35.4px;letter-spacing:0px;text-indent:0.0px">*NUM*</span> src=</span><span style="letter-spacing:0.23px"><span class="hl" style="width:27.1px;letter-spacing:0.8px;text-indent:0.4px">*****</span> dst=</span><span style="letter-spacing:0.262px"><span class="hl" style="width:27.1px;letter-spacing:0.8px;text-indent:0.4px">*****</span> proto=</span><span style="letter-spacing:2.225px"><span class="hl" style="width:27.1px;letter-spacing:0.8px;text-indent:0.4px">*****</span>/</span><span style="letter-spacing:0.05px"><span class="hl" style="width:27.1px;letter-spacing:0.8px;text-indent:0.4px">*****</span> sent=</span><span style="letter-spacing:-0.243px"><span class="hl" style="width:35.4px;letter-spacing:0px;text-indent:0.0px">*NUM*</span> spkt=1 cdur=16</span></div>
<div class="pl" style="top:1168.8px;height:20px;line-height:20px;font-size:12.5px;color:#e4e4e4;white-space:pre;left:665.2px;"><span style="letter-spacing:-0.048px">&lt;134&gt; oracle-server journal[</span><span style="letter-spacing:0.305px"><span class="hl" style="width:35.4px;letter-spacing:0px;text-indent:0.0px">*NUM*</span>]: oracle audit[</span><span style="letter-spacing:0.016px"><span class="hl" style="width:35.4px;letter-spacing:0px;text-indent:0.0px">*NUM*</span>]: length: </span><span style="letter-spacing:0.011px"><span class="hl" style="width:35.4px;letter-spacing:0px;text-indent:0.0px">*NUM*</span> sessionid:[7] </span><span style="letter-spacing:-0.205px"><span class="hl" style="width:35.4px;letter-spacing:0px;text-indent:0.0px">*NUM*</span> entryid:[1] &quot;1&quot; statement:[1] </span><span style="letter-spacing:0.103px"><span class="hl" style="width:35.4px;letter-spacing:0px;text-indent:0.0px">*NUM*</span> userid:[4] </span><span style="letter-spacing:0.067px"><span class="hl" style="width:27.1px;letter-spacing:0.8px;text-indent:0.4px">*****</span> userhost:[</span><span style="letter-spacing:0.876px"><span class="hl" style="width:35.4px;letter-spacing:0px;text-indent:0.0px">*NUM*</span>] </span><span style="letter-spacing:0.137px"><span class="hl" style="width:27.1px;letter-spacing:0.8px;text-indent:0.4px">*****</span> terminal:[3] </span><span style="letter-spacing:0.286px"><span class="hl" style="width:27.1px;letter-spacing:0.8px;text-indent:0.4px">*****</span> action:[3] </span><span style="letter-spacing:-0.163px"><span class="hl" style="width:35.4px;letter-spacing:0px;text-indent:0.0px">*NUM*</span> returncode:[1] &quot;0&quot;</span></div>
<div class="pl" style="top:1184.5px;height:20px;line-height:20px;font-size:12.5px;color:#e4e4e4;white-space:pre;left:665.2px;"><span style="letter-spacing:0.331px">commenttext:[</span><span style="letter-spacing:0.876px"><span class="hl" style="width:35.4px;letter-spacing:0px;text-indent:0.0px">*NUM*</span>] </span><span style="letter-spacing:0.088px"><span class="hl" style="width:27.1px;letter-spacing:0.8px;text-indent:0.4px">*****</span> osuserid:[4] </span><span style="letter-spacing:-0.082px"><span class="hl" style="width:27.1px;letter-spacing:0.8px;text-indent:0.4px">*****</span> dbid:[10] </span><span style="letter-spacing:-0.105px"><span class="hl" style="width:35.4px;letter-spacing:0px;text-indent:0.0px">*NUM*</span> privused:[1] </span><span style="letter-spacing:0.201px"><span class="hl" style="width:35.4px;letter-spacing:0px;text-indent:0.0px">*NUM*</span> current_user:[4] </span><span style="letter-spacing:-0.2px"><span class="hl" style="width:27.1px;letter-spacing:0.8px;text-indent:0.4px">*****</span></span></div></main>
<section style="left:0;top:0;width:1919px;height:1199px"><svg style="left:1183px;top:756px" width="14" height="7" viewBox="0 0 14 7"><path d="M0 7L7 0.500 14 7z" fill="#323232"/></svg>
<div style="left:1017px;top:762px;width:362px;height:240px;background:#323232;border-radius:6px;overflow:hidden;box-shadow:0 1px 5px rgba(0,0,0,.25)"><span style="left:12.5px;top:7.5px;font-size:15px;line-height:21px;color:#e2e2e2;letter-spacing:0.417px;-webkit-text-stroke:.55px #e2e2e2;">Distribution of Values</span><div style="left:4px;top:36px;width:350px;height:1px;background:#3d3d3d;"></div><span style="left:12.5px;top:41.3px;font-size:12px;line-height:17px;color:#e4e4e4;transform:scaleX(0.9871);transform-origin:0 50%;font-weight:700;letter-spacing:-0.15px;">VALUE</span><span style="left:162.5px;top:41.3px;font-size:12px;line-height:17px;color:#e4e4e4;font-weight:700;letter-spacing:0.164px;">COUNT</span><span style="left:262.5px;top:41.3px;font-size:12px;line-height:17px;color:#e4e4e4;transform:scaleX(0.9576);transform-origin:0 50%;font-weight:700;letter-spacing:-0.15px;">SHARE %</span><div style="left:4px;top:62px;width:350px;height:1px;background:#3d3d3d;"></div><span style="left:12.5px;top:73.8px;font-size:11.5px;line-height:17px;color:#e4e4e4;transform:scaleX(0.904);transform-origin:0 50%;letter-spacing:-0.15px;">10801</span><span style="left:162.5px;top:73.8px;font-size:11.5px;line-height:17px;color:#e4e4e4;transform:scaleX(0.7388);transform-origin:0 50%;letter-spacing:-0.15px;">151</span><span style="left:262.5px;top:73.8px;font-size:11.5px;line-height:17px;color:#e4e4e4;transform:scaleX(0.977);transform-origin:0 50%;letter-spacing:-0.15px;">5.29%</span><div style="left:4px;top:102px;width:350px;height:1px;background:#3d3d3d;"></div><span style="left:12.5px;top:113.8px;font-size:11.5px;line-height:17px;color:#e4e4e4;transform:scaleX(0.8779);transform-origin:0 50%;letter-spacing:-0.15px;">3771</span><span style="left:162.5px;top:113.8px;font-size:11.5px;line-height:17px;color:#e4e4e4;transform:scaleX(0.9195);transform-origin:0 50%;letter-spacing:-0.15px;">150</span><span style="left:262.5px;top:113.8px;font-size:11.5px;line-height:17px;color:#e4e4e4;transform:scaleX(0.9833);transform-origin:0 50%;letter-spacing:-0.15px;">5.26%</span><div style="left:4px;top:142px;width:350px;height:1px;background:#3d3d3d;"></div><span style="left:12.5px;top:153.8px;font-size:11.5px;line-height:17px;color:#e4e4e4;transform:scaleX(0.8717);transform-origin:0 50%;letter-spacing:-0.15px;">8911</span><span style="left:162.5px;top:153.8px;font-size:11.5px;line-height:17px;color:#e4e4e4;transform:scaleX(0.9195);transform-origin:0 50%;letter-spacing:-0.15px;">148</span><span style="left:262.5px;top:153.8px;font-size:11.5px;line-height:17px;color:#e4e4e4;transform:scaleX(0.8862);transform-origin:0 50%;letter-spacing:-0.15px;">5.19%</span><div style="left:4px;top:182px;width:350px;height:1px;background:#3d3d3d;"></div><span style="left:12.5px;top:193.8px;font-size:11.5px;line-height:17px;color:#e4e4e4;transform:scaleX(0.8139);transform-origin:0 50%;letter-spacing:-0.15px;">1123</span><span style="left:162.5px;top:193.8px;font-size:11.5px;line-height:17px;color:#e4e4e4;transform:scaleX(0.8664);transform-origin:0 50%;letter-spacing:-0.15px;">147</span><span style="left:262.5px;top:193.8px;font-size:11.5px;line-height:17px;color:#e4e4e4;transform:scaleX(0.8862);transform-origin:0 50%;letter-spacing:-0.15px;">5.15%</span><div style="left:4px;top:222px;width:350px;height:1px;background:#3d3d3d;"></div><span style="left:12.5px;top:233.8px;font-size:11.5px;line-height:17px;color:#e4e4e4;transform:scaleX(0.9264);transform-origin:0 50%;letter-spacing:-0.15px;">30777</span><span style="left:162.5px;top:233.8px;font-size:11.5px;line-height:17px;color:#e4e4e4;transform:scaleX(0.8664);transform-origin:0 50%;letter-spacing:-0.15px;">147</span><span style="left:262.5px;top:233.8px;font-size:11.5px;line-height:17px;color:#e4e4e4;transform:scaleX(0.8862);transform-origin:0 50%;letter-spacing:-0.15px;">5.15%</span></div></section>
</div></body></html>
